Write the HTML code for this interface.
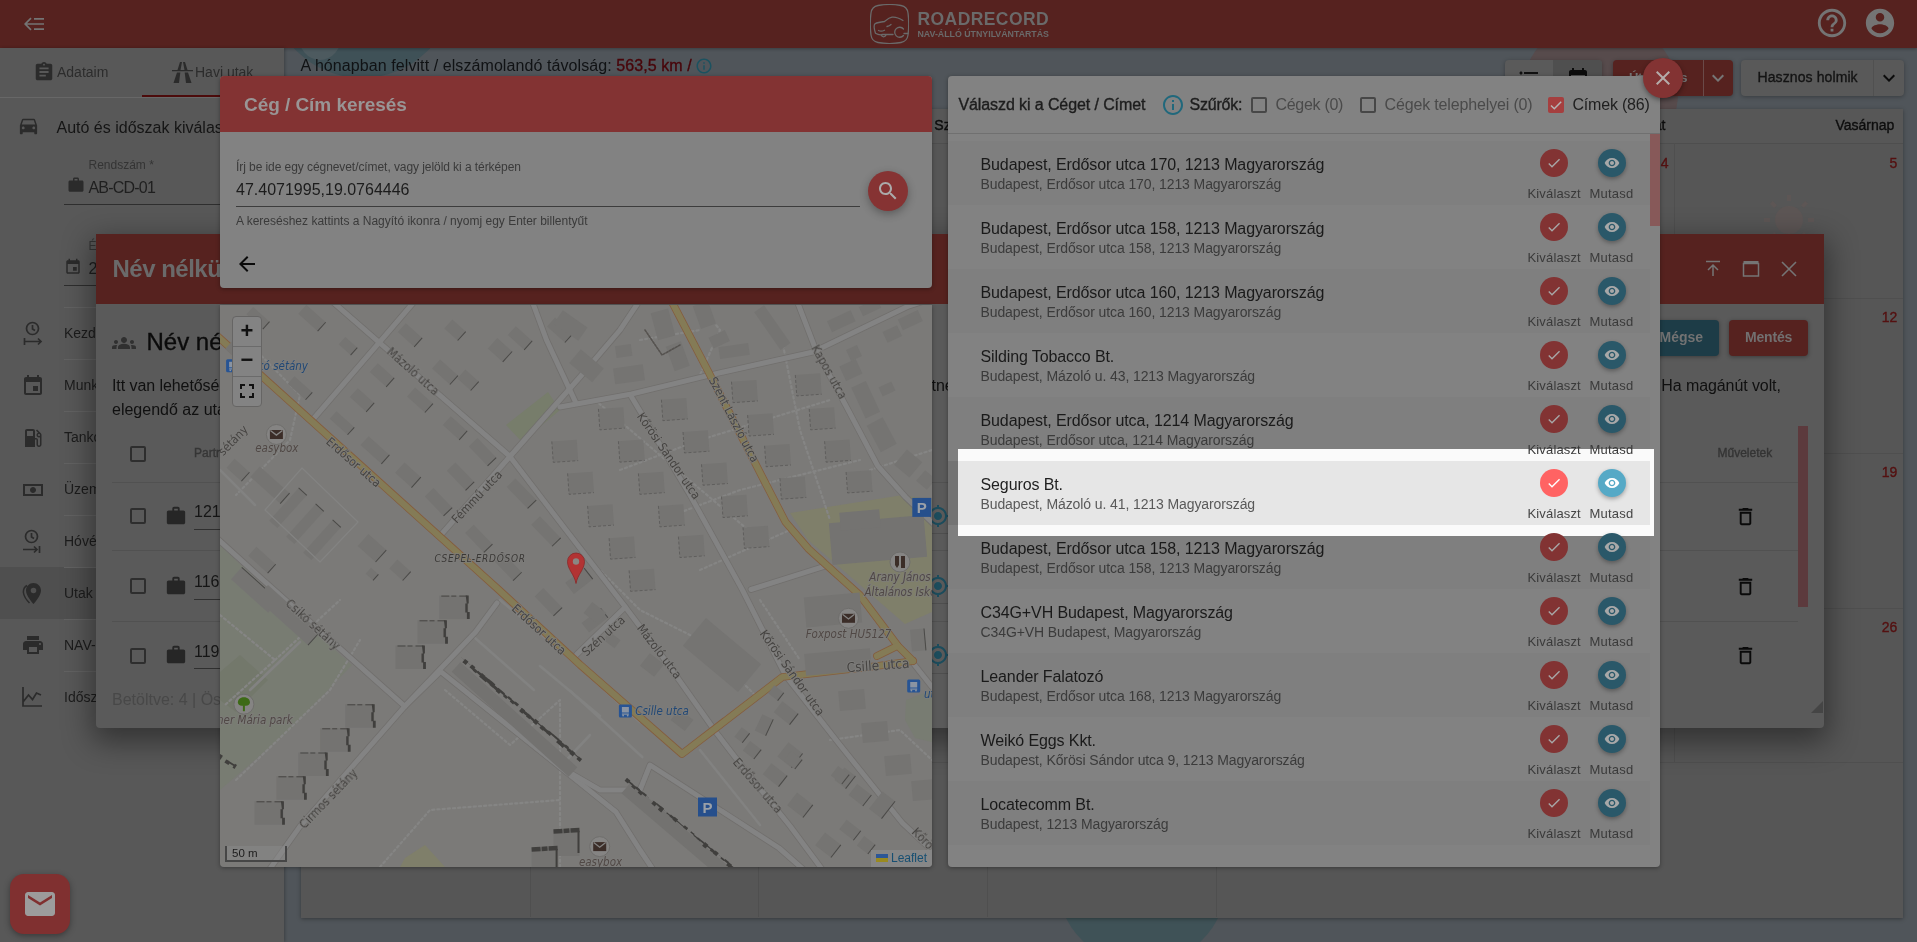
<!DOCTYPE html>
<html lang="hu"><head><meta charset="utf-8"><title>RoadRecord</title>
<style>
html,body{margin:0;padding:0}
body{width:1917px;height:942px;overflow:hidden;position:relative;background:#50555a;font-family:"Liberation Sans",sans-serif}
.a,.t,.ic{position:absolute}
.t{white-space:nowrap}
.m{-webkit-text-stroke:0.35px currentColor}

.bx{position:absolute;box-sizing:border-box}

</style></head><body>
<div id="app" style="position:absolute;left:0;top:0;width:1917px;height:942px;overflow:hidden;will-change:transform">
<div class="a" style="left:284px;top:48px;width:1633px;height:894px;background:#50555a;overflow:hidden"><div class="a" style="left:-14px;top:-152px;width:184px;height:182px;border-radius:50%;background:#3f5157"></div><div class="a" style="left:14px;top:-40px;width:44px;height:52px;border-radius:50%;background:#4d5a5f"></div><div class="a" style="left:1238px;top:-30px;width:156px;height:150px;border-radius:50%;background:#574b4c"></div><div class="a" style="left:773px;top:747px;width:170px;height:170px;border-radius:50%;background:#3f5257"></div></div>
<div class="a" style="left:0;top:0;width:1917px;height:48px;background:#56221f;box-shadow:0 1px 3px rgba(0,0,0,.3)"></div>
<svg class="ic" style="left:24px;top:17px;width:21px;height:14px" viewBox="0 0 21 14"><g stroke="#747474" stroke-width="1.7" fill="none"><path d="M7 1.2 1.2 7 7 12.800M1.2 7H20M10 1.800h10M10 12.200h10"/></g></svg>
<svg class="ic" style="left:870px;top:4px;width:39px;height:40px" viewBox="0 0 39 40"><g fill="none" stroke="#6a6a6a" stroke-width="1.3" stroke-linecap="round"><path d="M8 1.500C14 .300 25 .300 31 1.500c4 .800 6.500 3.500 7 7.500.800 6 .800 16 0 22-.5 4-3 6.700-7 7.500-6 1.200-17 1.200-23 0-4-.800-6.500-3.500-7-7.500-.800-6-.800-16 0-22 .5-4 3-6.700 7-7.500z"/><path d="M33 16.500c-4-2.500-8-3.800-11-3.300-3 .5-5 2.300-7.500 4.300-3 .3-7 .800-9.500 2.300-1 1-1 5 .5 9.500 2 1.200 3.500 1.500 5 1.500M11 30.800c1.200 2.700 4 2.700 5.200 0M12 30.500h11M17 22.500c1.500-.3 3-1 4-2M8.500 26.500c1.500.8 4 .8 6-.3"/><path d="M33.500 25a5 5 0 1 0 0 6.500M34 29.500h4"/></g></svg>
<div class="t" style="left:917.500px;top:8.500px;font-size:17.500px;line-height:20px;font-weight:700;color:#6a6a6a;letter-spacing:.42px">ROADRECORD</div>
<div class="t" style="left:917.500px;top:28.500px;font-size:8.800px;line-height:11px;font-weight:700;color:#6a6a6a">NAV-ÁLLÓ ÚTNYILVÁNTARTÁS</div>
<svg class="ic" style="left:1815px;top:6px;width:34px;height:34px;" viewBox="0 0 24 24"><path fill="#747474" d="M11 18h2v-2h-2v2zm1-16C6.48 2 2 6.48 2 12s4.48 10 10 10 10-4.48 10-10S17.52 2 12 2zm0 18c-4.41 0-8-3.59-8-8s3.59-8 8-8 8 3.59 8 8-3.59 8-8 8zm0-14c-2.21 0-4 1.79-4 4h2c0-1.1.9-2 2-2s2 .9 2 2c0 2-3 1.75-3 5h2c0-2.25 3-2.5 3-5 0-2.21-1.79-4-4-4z"/></svg>
<svg class="ic" style="left:1863px;top:6px;width:34px;height:34px;" viewBox="0 0 24 24"><path fill="#747474" d="M12 2C6.48 2 2 6.48 2 12s4.48 10 10 10 10-4.48 10-10S17.52 2 12 2zm0 3c1.66 0 3 1.34 3 3s-1.34 3-3 3-3-1.34-3-3 1.34-3 3-3zm0 14.2c-2.5 0-4.71-1.28-6-3.22.03-1.99 4-3.08 6-3.08 1.99 0 5.97 1.09 6 3.08-1.29 1.94-3.5 3.22-6 3.22z"/></svg>
<div class="a" style="left:0;top:48px;width:284px;height:894px;background:#585858;box-shadow:1px 0 3px rgba(0,0,0,.25)"></div>
<div class="a" style="left:0;top:97px;width:284px;height:1px;background:#676767"></div>
<div class="a" style="left:142px;top:95px;width:142px;height:2px;background:#4c0b0b"></div>
<svg class="ic" style="left:33px;top:61px;width:22px;height:22px;" viewBox="0 0 24 24"><path fill="#2b2b2b" d="M19 3h-4.18C14.4 1.84 13.3 1 12 1c-1.3 0-2.4.84-2.82 2H5c-1.1 0-2 .9-2 2v14c0 1.1.9 2 2 2h14c1.1 0 2-.9 2-2V5c0-1.1-.9-2-2-2zm-7 0c.55 0 1 .45 1 1s-.45 1-1 1-1-.45-1-1 .45-1 1-1zm2 14H7v-2h7v2zm3-4H7v-2h10v2zm0-4H7V7h10v2z"/></svg>
<div class="t " style="left:57px;top:63.0px;font-size:14px;line-height:18px;color:#2c2c2c;font-weight:400;">Adataim</div>
<svg class="ic" style="left:172px;top:62px;width:21px;height:21px" viewBox="0 0 21 21"><path fill="#2b2b2b" d="M0 8h21v1.300H0zM8 0h2L8.500 8h-3zM11 0h2l2.500 8h-3zM5 10.500h3.300L7 21H1.500zM12.700 10.500H16L19.500 21H14z"/></svg>
<div class="t " style="left:195px;top:63.0px;font-size:14px;line-height:18px;color:#2c2c2c;font-weight:400;">Havi utak</div>
<svg class="ic" style="left:16.5px;top:114px;width:23px;height:23px;" viewBox="0 0 24 24"><path fill="#2b2b2b" d="M18.92 6.01C18.72 5.42 18.16 5 17.5 5h-11c-.66 0-1.21.42-1.42 1.01L3 12v8c0 .55.45 1 1 1h1c.55 0 1-.45 1-1v-1h12v1c0 .55.45 1 1 1h1c.55 0 1-.45 1-1v-8l-2.08-5.99zM6.5 16c-.83 0-1.5-.67-1.5-1.5S5.67 13 6.5 13s1.5.67 1.5 1.5S7.33 16 6.5 16zm11 0c-.83 0-1.5-.67-1.5-1.5s.67-1.5 1.5-1.5 1.5.67 1.5 1.5-.67 1.5-1.5 1.5zM5 11l1.5-4.5h11L19 11H5z"/></svg>
<div class="t " style="left:56.5px;top:118.0px;font-size:16px;line-height:20px;color:#151515;font-weight:400;">Autó és időszak kiválasztás</div>
<div class="t " style="left:88.5px;top:158.0px;font-size:12px;line-height:15px;color:#343434;font-weight:400;">Rendszám *</div>
<svg class="ic" style="left:66.5px;top:176px;width:18px;height:18px;" viewBox="0 0 24 24"><path fill="#2b2b2b" d="M20 6h-4V4c0-1.11-.89-2-2-2h-4c-1.11 0-2 .89-2 2v2H4c-1.11 0-1.99.89-1.99 2L2 19c0 1.11.89 2 2 2h16c1.11 0 2-.89 2-2V8c0-1.11-.89-2-2-2zm-6 0h-4V4h4v2z"/></svg>
<div class="t " style="left:88.5px;top:177.5px;font-size:16px;line-height:20px;color:#1f1f1f;font-weight:400;letter-spacing:-.8px">AB-CD-01</div>
<div class="a" style="left:64px;top:204px;width:220px;height:1px;background:#2e2e2e"></div>
<div class="t " style="left:88.5px;top:238.5px;font-size:12px;line-height:15px;color:#343434;font-weight:400;">Év</div>
<svg class="ic" style="left:64px;top:258px;width:18px;height:18px;" viewBox="0 0 24 24"><path fill="#2b2b2b" d="M17 12h-5v5h5v-5zM16 1v2H8V1H6v2H5c-1.11 0-1.99.9-1.99 2L3 19c0 1.1.89 2 2 2h14c1.1 0 2-.9 2-2V5c0-1.1-.9-2-2-2h-1V1h-2zm3 18H5V8h14v11z"/></svg>
<div class="t " style="left:88.5px;top:258.5px;font-size:16px;line-height:20px;color:#1f1f1f;font-weight:400;">2024</div>
<div class="a" style="left:64px;top:284.500px;width:220px;height:1px;background:#2e2e2e"></div>
<div class="a" style="left:0;top:567px;width:284px;height:52px;background:#4f4f4f"></div>
<div class="a" style="left:64px;top:307px;width:220px;height:1px;background:#626262"></div>
<div class="t " style="left:64px;top:324.0px;font-size:14px;line-height:18px;color:#1c1c1c;font-weight:400;">Kezdő km óra állás</div>
<div class="a" style="left:64px;top:359px;width:220px;height:1px;background:#626262"></div>
<div class="t " style="left:64px;top:376.0px;font-size:14px;line-height:18px;color:#1c1c1c;font-weight:400;">Munkanapok</div>
<div class="a" style="left:64px;top:411px;width:220px;height:1px;background:#626262"></div>
<div class="t " style="left:64px;top:428.0px;font-size:14px;line-height:18px;color:#1c1c1c;font-weight:400;">Tankolások</div>
<div class="a" style="left:64px;top:463px;width:220px;height:1px;background:#626262"></div>
<div class="t " style="left:64px;top:480.0px;font-size:14px;line-height:18px;color:#1c1c1c;font-weight:400;">Üzemanyag árak</div>
<div class="a" style="left:64px;top:515px;width:220px;height:1px;background:#626262"></div>
<div class="t " style="left:64px;top:532.0px;font-size:14px;line-height:18px;color:#1c1c1c;font-weight:400;">Hóvégi km óra állás</div>
<div class="a" style="left:64px;top:567px;width:220px;height:1px;background:#626262"></div>
<div class="t " style="left:64px;top:584.0px;font-size:14px;line-height:18px;color:#1c1c1c;font-weight:400;">Utak</div>
<div class="a" style="left:64px;top:619px;width:220px;height:1px;background:#626262"></div>
<div class="t " style="left:64px;top:636.0px;font-size:14px;line-height:18px;color:#1c1c1c;font-weight:400;">NAV-álló nyomtatás</div>
<div class="a" style="left:64px;top:671px;width:220px;height:1px;background:#626262"></div>
<div class="t " style="left:64px;top:688.0px;font-size:14px;line-height:18px;color:#1c1c1c;font-weight:400;">Időszaki elemzés</div>
<svg class="ic" style="left:23px;top:321px;width:20px;height:26px" viewBox="0 0 20 26"><g fill="none" stroke="#2b2b2b" stroke-width="1.700"><circle cx="9.500" cy="7.500" r="6"/><path d="M9.500 4v4l2.500 1.500"/><path d="M1.500 17v7M1.500 20.500H18M15 17.500l3 3-3 3"/></g></svg>
<svg class="ic" style="left:21px;top:374px;width:24px;height:24px;" viewBox="0 0 24 24"><path fill="#2b2b2b" d="M17 12h-5v5h5v-5zM16 1v2H8V1H6v2H5c-1.11 0-1.99.9-1.99 2L3 19c0 1.1.89 2 2 2h14c1.1 0 2-.9 2-2V5c0-1.1-.9-2-2-2h-1V1h-2zm3 18H5V8h14v11z"/></svg>
<svg class="ic" style="left:21px;top:426px;width:24px;height:24px;" viewBox="0 0 24 24"><path fill="#2b2b2b" d="M19.77 7.23l.01-.01-3.72-3.72L15 4.56l2.11 2.11c-.94.36-1.61 1.26-1.61 2.33 0 1.38 1.12 2.5 2.5 2.5.36 0 .69-.08 1-.21v7.21c0 .55-.45 1-1 1s-1-.45-1-1V14c0-1.1-.9-2-2-2h-1V5c0-1.1-.9-2-2-2H6c-1.1 0-2 .9-2 2v16h10v-7.5h1.5v5c0 1.38 1.12 2.5 2.5 2.5s2.5-1.12 2.5-2.5V9c0-.69-.28-1.32-.73-1.77zM12 10H6V5h6v5zm6 0c-.55 0-1-.45-1-1s.45-1 1-1 1 .45 1 1-.45 1-1 1z"/></svg>
<svg class="ic" style="left:21px;top:478px;width:24px;height:24px;" viewBox="0 0 24 24"><path fill="#2b2b2b" d="M2 6v12h20V6H2zm18 10H4V8h16v8zm-8-7c-1.66 0-3 1.34-3 3s1.34 3 3 3 3-1.34 3-3-1.34-3-3-3z"/></svg>
<svg class="ic" style="left:22px;top:529px;width:20px;height:26px" viewBox="0 0 20 26"><g fill="none" stroke="#2b2b2b" stroke-width="1.700"><circle cx="9.500" cy="7.500" r="6"/><path d="M9.500 4v4l2.500 1.500"/><path d="M1 20.500H15M12 17.500l3 3-3 3M17.500 17v7"/></g></svg>
<svg class="ic" style="left:22px;top:582px;width:20px;height:24px" viewBox="0 0 20 24"><path fill="#2b2b2b" d="M11.500 1C7.400 1 4 4.300 4 8.500c0 5.500 7.500 13.500 7.500 13.500S19 14 19 8.500C19 4.300 15.600 1 11.500 1zm0 10.300a2.800 2.800 0 1 1 0-5.600 2.800 2.800 0 0 1 0 5.600z"/><path fill="none" stroke="#2b2b2b" stroke-width="1.500" d="M5 3.500C2.500 5 1 7.500 1.500 11c.5 3.500 3 7 6 10"/></svg>
<svg class="ic" style="left:21px;top:633px;width:24px;height:24px;" viewBox="0 0 24 24"><path fill="#2b2b2b" d="M19 8H5c-1.66 0-3 1.34-3 3v6h4v4h12v-4h4v-6c0-1.66-1.34-3-3-3zm-3 11H8v-5h8v5zm3-7c-.55 0-1-.45-1-1s.45-1 1-1 1 .45 1 1-.45 1-1 1zm-1-9H6v4h12V3z"/></svg>
<svg class="ic" style="left:21px;top:686px;width:22px;height:22px" viewBox="0 0 22 22"><path fill="none" stroke="#2b2b2b" stroke-width="1.700" d="M2 1v19h19M2 16l5.500-7 4 4.500 4-6.500 4.500 2"/></svg>
<div class="a" style="left:10px;top:874px;width:60px;height:60px;border-radius:14px;background:#803030;box-shadow:0 2px 6px rgba(0,0,0,.35)"></div>
<svg class="ic" style="left:22px;top:886px;width:36px;height:36px;" viewBox="0 0 24 24"><path fill="#9c9c9c" d="M20 4H4c-1.1 0-1.99.9-1.99 2L2 18c0 1.1.9 2 2 2h16c1.1 0 2-.9 2-2V6c0-1.1-.9-2-2-2zm0 4l-8 5-8-5V6l8 5 8-5v2z"/></svg>
<div class="t " style="left:300.5px;top:56.0px;font-size:16px;line-height:20px;color:#101214;font-weight:400;letter-spacing:.08px">A hónapban felvitt / elszámolandó távolság: <span class="m" style="color:#48050a">563,5 km /</span></div>
<svg class="ic" style="left:694.8px;top:57px;width:18px;height:18px;" viewBox="0 0 24 24"><path fill="#1c5260" d="M11 7h2v2h-2zm0 4h2v6h-2zm1-9C6.48 2 2 6.48 2 12s4.48 10 10 10 10-4.48 10-10S17.52 2 12 2zm0 18c-4.41 0-8-3.59-8-8s3.59-8 8-8 8 3.59 8 8-3.59 8-8 8z"/></svg>
<div class="a" style="left:1505px;top:60px;width:97px;height:36px;border-radius:4px;background:#5a5a5a;box-shadow:0 1px 4px rgba(0,0,0,.3)"></div>
<div class="a" style="left:1553px;top:60px;width:49px;height:36px;border-radius:0 4px 4px 0;background:#4f4f4f"></div>
<svg class="ic" style="left:1517px;top:67px;width:24px;height:24px;" viewBox="0 0 24 24"><path fill="#111" d="M4 10.5c-.83 0-1.5.67-1.5 1.5s.67 1.5 1.5 1.5 1.5-.67 1.5-1.5-.67-1.5-1.5-1.5zm0-6c-.83 0-1.5.67-1.5 1.5S3.17 7.500 4 7.500 5.500 6.830 5.500 6 4.830 4.500 4 4.500zm0 12c-.83 0-1.500.68-1.500 1.500s.68 1.500 1.500 1.500 1.500-.68 1.500-1.500-.67-1.500-1.500-1.500zM7 19h14v-2H7v2zm0-6h14v-2H7v2zm0-8v2h14V5H7z"/></svg>
<svg class="ic" style="left:1566px;top:67px;width:24px;height:24px;" viewBox="0 0 24 24"><path fill="#0c0c0c" d="M17 12h-5v5h5v-5zM16 1v2H8V1H6v2H5c-1.11 0-1.99.9-1.99 2L3 19c0 1.1.89 2 2 2h14c1.1 0 2-.9 2-2V5c0-1.1-.9-2-2-2h-1V1h-2zm3 18H5V8h14v11z"/></svg>
<div class="a" style="left:1613px;top:60px;width:120px;height:36px;border-radius:4px;background:#56221f;box-shadow:0 1px 4px rgba(0,0,0,.3)"></div>
<div class="a" style="left:1703px;top:60px;width:1px;height:36px;background:#6a4a48"></div>
<div class="t " style="left:1629px;top:70.0px;font-size:13px;line-height:16px;color:#767676;font-weight:700;letter-spacing:-.45px">Útvonalas</div>
<svg class="ic" style="left:1706px;top:66px;width:24px;height:24px;" viewBox="0 0 24 24"><path fill="#767676" d="M16.59 8.59L12 13.17 7.41 8.59 6 10l6 6 6-6z"/></svg>
<div class="a" style="left:1741px;top:60px;width:163px;height:36px;border-radius:4px;background:#595959;box-shadow:0 1px 4px rgba(0,0,0,.3)"></div>
<div class="a" style="left:1873px;top:60px;width:1px;height:36px;background:#505050"></div>
<div class="t m" style="left:1757.5px;top:67.7px;font-size:14px;line-height:18px;color:#141414;font-weight:400;letter-spacing:.1px">Hasznos holmik</div>
<svg class="ic" style="left:1877px;top:66px;width:24px;height:24px;" viewBox="0 0 24 24"><path fill="#0c0c0c" d="M16.59 8.59L12 13.17 7.41 8.59 6 10l6 6 6-6z"/></svg>
<div class="a" style="left:300.500px;top:108.500px;width:1602.500px;height:809.500px;background:#565656;box-shadow:0 1px 4px rgba(0,0,0,.35)"></div>
<div class="a" style="left:300.500px;top:108.500px;width:1602.500px;height:35px;background:#575757"></div>
<div class="a" style="left:300.500px;top:143px;width:1602.500px;height:1px;background:#4e4e4e"></div>
<div class="a" style="left:529.5px;top:143px;width:1px;height:774px;background:#4f4f4f"></div>
<div class="a" style="left:758.4px;top:143px;width:1px;height:774px;background:#4f4f4f"></div>
<div class="a" style="left:987.3px;top:143px;width:1px;height:774px;background:#4f4f4f"></div>
<div class="a" style="left:1216.2px;top:143px;width:1px;height:774px;background:#4f4f4f"></div>
<div class="a" style="left:1445.1px;top:143px;width:1px;height:619.5px;background:#4f4f4f"></div>
<div class="a" style="left:1674.0px;top:143px;width:1px;height:619.5px;background:#4f4f4f"></div>
<div class="a" style="left:300.500px;top:298.1px;width:1602.500px;height:1px;background:#4f4f4f"></div>
<div class="a" style="left:300.500px;top:452.8px;width:1602.500px;height:1px;background:#4f4f4f"></div>
<div class="a" style="left:300.500px;top:607.5px;width:1602.500px;height:1px;background:#4f4f4f"></div>
<div class="a" style="left:300.500px;top:762.2px;width:1602.500px;height:1px;background:#4f4f4f"></div>
<div class="t m" style="left:300.6px;width:220.3px;text-align:right;top:116px;font-size:14px;line-height:18px;color:#0d0d0d">Hétfő</div>
<div class="t m" style="left:529.5px;width:220.3px;text-align:right;top:116px;font-size:14px;line-height:18px;color:#0d0d0d">Kedd</div>
<div class="t m" style="left:758.4px;width:220.3px;text-align:right;top:116px;font-size:14px;line-height:18px;color:#0d0d0d">Szerda</div>
<div class="t m" style="left:987.3px;width:220.3px;text-align:right;top:116px;font-size:14px;line-height:18px;color:#0d0d0d">Csütörtök</div>
<div class="t m" style="left:1216.2px;width:220.3px;text-align:right;top:116px;font-size:14px;line-height:18px;color:#0d0d0d">Péntek</div>
<div class="t m" style="left:1445.1px;width:220.3px;text-align:right;top:116px;font-size:14px;line-height:18px;color:#0d0d0d">Szombat</div>
<div class="t m" style="left:1674.0px;width:220.3px;text-align:right;top:116px;font-size:14px;line-height:18px;color:#0d0d0d">Vasárnap</div>
<div class="t m" style="left:758.4px;width:223.4px;text-align:right;top:153.5px;font-size:14px;line-height:18px;color:#1a1a1a">1</div>
<div class="t m" style="left:987.3px;width:223.4px;text-align:right;top:153.5px;font-size:14px;line-height:18px;color:#1a1a1a">2</div>
<div class="t m" style="left:1216.2px;width:223.4px;text-align:right;top:153.5px;font-size:14px;line-height:18px;color:#1a1a1a">3</div>
<div class="t m" style="left:1445.1px;width:223.4px;text-align:right;top:153.5px;font-size:14px;line-height:18px;color:#541010">4</div>
<div class="t m" style="left:1674.0px;width:223.4px;text-align:right;top:153.5px;font-size:14px;line-height:18px;color:#541010">5</div>
<div class="t m" style="left:300.6px;width:223.4px;text-align:right;top:308.2px;font-size:14px;line-height:18px;color:#1a1a1a">6</div>
<div class="t m" style="left:529.5px;width:223.4px;text-align:right;top:308.2px;font-size:14px;line-height:18px;color:#1a1a1a">7</div>
<div class="t m" style="left:758.4px;width:223.4px;text-align:right;top:308.2px;font-size:14px;line-height:18px;color:#1a1a1a">8</div>
<div class="t m" style="left:987.3px;width:223.4px;text-align:right;top:308.2px;font-size:14px;line-height:18px;color:#1a1a1a">9</div>
<div class="t m" style="left:1216.2px;width:223.4px;text-align:right;top:308.2px;font-size:14px;line-height:18px;color:#1a1a1a">10</div>
<div class="t m" style="left:1445.1px;width:223.4px;text-align:right;top:308.2px;font-size:14px;line-height:18px;color:#541010">11</div>
<div class="t m" style="left:1674.0px;width:223.4px;text-align:right;top:308.2px;font-size:14px;line-height:18px;color:#541010">12</div>
<div class="t m" style="left:300.6px;width:223.4px;text-align:right;top:462.9px;font-size:14px;line-height:18px;color:#1a1a1a">13</div>
<div class="t m" style="left:529.5px;width:223.4px;text-align:right;top:462.9px;font-size:14px;line-height:18px;color:#1a1a1a">14</div>
<div class="t m" style="left:758.4px;width:223.4px;text-align:right;top:462.9px;font-size:14px;line-height:18px;color:#1a1a1a">15</div>
<div class="t m" style="left:987.3px;width:223.4px;text-align:right;top:462.9px;font-size:14px;line-height:18px;color:#1a1a1a">16</div>
<div class="t m" style="left:1216.2px;width:223.4px;text-align:right;top:462.9px;font-size:14px;line-height:18px;color:#1a1a1a">17</div>
<div class="t m" style="left:1445.1px;width:223.4px;text-align:right;top:462.9px;font-size:14px;line-height:18px;color:#541010">18</div>
<div class="t m" style="left:1674.0px;width:223.4px;text-align:right;top:462.9px;font-size:14px;line-height:18px;color:#541010">19</div>
<div class="t m" style="left:300.6px;width:223.4px;text-align:right;top:617.6px;font-size:14px;line-height:18px;color:#1a1a1a">20</div>
<div class="t m" style="left:529.5px;width:223.4px;text-align:right;top:617.6px;font-size:14px;line-height:18px;color:#1a1a1a">21</div>
<div class="t m" style="left:758.4px;width:223.4px;text-align:right;top:617.6px;font-size:14px;line-height:18px;color:#1a1a1a">22</div>
<div class="t m" style="left:987.3px;width:223.4px;text-align:right;top:617.6px;font-size:14px;line-height:18px;color:#1a1a1a">23</div>
<div class="t m" style="left:1216.2px;width:223.4px;text-align:right;top:617.6px;font-size:14px;line-height:18px;color:#1a1a1a">24</div>
<div class="t m" style="left:1445.1px;width:223.4px;text-align:right;top:617.6px;font-size:14px;line-height:18px;color:#541010">25</div>
<div class="t m" style="left:1674.0px;width:223.4px;text-align:right;top:617.6px;font-size:14px;line-height:18px;color:#541010">26</div>
<div class="t m" style="left:300.6px;width:223.4px;text-align:right;top:772.3px;font-size:14px;line-height:18px;color:#1a1a1a">27</div>
<div class="t m" style="left:529.5px;width:223.4px;text-align:right;top:772.3px;font-size:14px;line-height:18px;color:#1a1a1a">28</div>
<div class="t m" style="left:758.4px;width:223.4px;text-align:right;top:772.3px;font-size:14px;line-height:18px;color:#1a1a1a">29</div>
<div class="t m" style="left:987.3px;width:223.4px;text-align:right;top:772.3px;font-size:14px;line-height:18px;color:#1a1a1a">30</div>
<div class="t m" style="left:1216.2px;width:223.4px;text-align:right;top:772.3px;font-size:14px;line-height:18px;color:#1a1a1a">31</div>
<svg class="ic" style="left:1762px;top:193px;width:54px;height:54px" viewBox="-27 -27 54 54"><g fill="#5d5655"><circle r="14"/><rect x="-2" y="-25" width="4" height="6" transform="rotate(0)"/><rect x="-2" y="-25" width="4" height="6" transform="rotate(45)"/><rect x="-2" y="-25" width="4" height="6" transform="rotate(90)"/><rect x="-2" y="-25" width="4" height="6" transform="rotate(135)"/><rect x="-2" y="-25" width="4" height="6" transform="rotate(180)"/><rect x="-2" y="-25" width="4" height="6" transform="rotate(225)"/><rect x="-2" y="-25" width="4" height="6" transform="rotate(270)"/><rect x="-2" y="-25" width="4" height="6" transform="rotate(315)"/></g></svg>
<div class="a" style="left:96px;top:234px;width:1728px;height:493.500px;border-radius:0 0 4px 4px;background:#5a5a5a;box-shadow:0 10px 30px 4px rgba(0,0,0,.42)"></div>
<div class="a" style="left:96px;top:234px;width:1728px;height:69.500px;background:#56221f"></div>
<div class="t " style="left:112.5px;top:253.5px;font-size:24px;line-height:30px;color:#6a6a6a;font-weight:700;letter-spacing:-.5px">Név nélküli út</div>
<svg class="ic" style="left:1704px;top:260px;width:18px;height:18px" viewBox="0 0 18 18"><path fill="none" stroke="#757575" stroke-width="1.500" d="M2 1.500h14M9 16V5M4 10l5-5 5 5"/></svg>
<svg class="ic" style="left:1742px;top:260px;width:18px;height:18px" viewBox="0 0 18 18"><path fill="none" stroke="#757575" stroke-width="1.500" d="M1.500 3.500h15v12.500h-15z"/><path stroke="#757575" stroke-width="3" d="M1.500 2.500h15"/></svg>
<svg class="ic" style="left:1780px;top:260px;width:18px;height:18px" viewBox="0 0 18 18"><path fill="none" stroke="#757575" stroke-width="1.600" d="M2 2l14 14M16 2 2 16"/></svg>
<svg class="ic" style="left:112px;top:330.5px;width:24px;height:24px;" viewBox="0 0 24 24"><path fill="#303030" d="M12 12.75c1.63 0 3.07.39 4.24.9 1.080.48 1.760 1.560 1.760 2.730V18H6v-1.610c0-1.180.68-2.260 1.760-2.730 1.170-.52 2.610-.91 4.240-.91zM4 13c1.100 0 2-.9 2-2s-.9-2-2-2-2 .9-2 2 .9 2 2 2zm1.130 1.100c-.37-.06-.74-.1-1.130-.1-.99 0-1.930.21-2.780.58C.48 14.900 0 15.620 0 16.430V18h4.500v-1.610c0-.83.23-1.610.63-2.290zM20 13c1.100 0 2-.9 2-2s-.9-2-2-2-2 .9-2 2 .9 2 2 2zm4 3.430c0-.81-.48-1.530-1.220-1.850-.85-.37-1.790-.58-2.780-.58-.39 0-.76.04-1.130.1.4.68.63 1.460.63 2.290V18H24v-1.570zM12 6c1.660 0 3 1.340 3 3s-1.340 3-3 3-3-1.340-3-3 1.340-3 3-3z"/></svg>
<div class="t m" style="left:146.5px;top:327.0px;font-size:24px;line-height:30px;color:#0b0b0b;font-weight:400;">Név nélküli út</div>
<div class="a" style="left:1645px;top:320px;width:74px;height:36px;border-radius:4px;background:#1d3c47;box-shadow:0 1px 4px rgba(0,0,0,.35)"></div>
<div class="t " style="left:1659.5px;top:327.5px;font-size:14px;line-height:18px;color:#727272;font-weight:700;">Mégse</div>
<div class="a" style="left:1729px;top:320px;width:79px;height:36px;border-radius:4px;background:#56221f;box-shadow:0 1px 4px rgba(0,0,0,.35)"></div>
<div class="t " style="left:1745px;top:327.5px;font-size:14px;line-height:18px;color:#727070;font-weight:700;letter-spacing:-.18px">Mentés</div>
<div class="t " style="left:112px;top:375.5px;font-size:16px;line-height:20px;color:#101010;font-weight:400;letter-spacing:-.073px">Itt van lehetőséged az úthoz tartozó partnereket megadni. Elegendő csak azt a partnert megadni, ahol jártál, más partnert nem szükséges felvinni.</div>
<div class="t " style="left:1661.3px;top:375.5px;font-size:16px;line-height:20px;color:#101010;font-weight:400;letter-spacing:-.09px">Ha magánút volt,</div>
<div class="t " style="left:112px;top:399.5px;font-size:16px;line-height:20px;color:#101010;font-weight:400;">elegendő az utazás kezdő és végpontját megadni.</div>
<div class="bx" style="left:130px;top:446px;width:16px;height:16px;border:2px solid #2e2e2e;border-radius:2px"></div>
<div class="t m" style="left:194px;top:446.0px;font-size:12px;line-height:15px;color:#363636;font-weight:400;">Partner</div>
<div class="t m" style="left:1717.5px;top:446.0px;font-size:12px;line-height:15px;color:#343434;font-weight:400;">Műveletek</div>
<div class="a" style="left:112px;top:481.5px;width:1686px;height:1px;background:#515151"></div>
<div class="a" style="left:112px;top:550.2px;width:1686px;height:1px;background:#515151"></div>
<div class="a" style="left:112px;top:620.5px;width:1686px;height:1px;background:#515151"></div>
<div class="bx" style="left:130px;top:508px;width:16px;height:16px;border:2px solid #2e2e2e;border-radius:2px"></div>
<svg class="ic" style="left:165px;top:504.5px;width:22px;height:22px;" viewBox="0 0 24 24"><path fill="#262626" d="M20 6h-4V4c0-1.11-.89-2-2-2h-4c-1.11 0-2 .89-2 2v2H4c-1.11 0-1.99.89-1.99 2L2 19c0 1.11.89 2 2 2h16c1.11 0 2-.89 2-2V8c0-1.11-.89-2-2-2zm-6 0h-4V4h4v2z"/></svg>
<div class="t " style="left:194px;top:502.0px;font-size:16px;line-height:20px;color:#151515;font-weight:400;">1213 Budapest, Erdősor utca 158</div>
<div class="a" style="left:194px;top:528.5px;width:720px;height:1px;background:#303030"></div>
<svg class="ic" style="left:926px;top:503.5px;width:24px;height:24px;" viewBox="0 0 24 24"><path fill="#1c4c5c" d="M12 8c-2.21 0-4 1.79-4 4s1.79 4 4 4 4-1.790 4-4-1.790-4-4-4zm8.940 3c-.46-4.170-3.770-7.480-7.940-7.940V1h-2v2.060C6.830 3.520 3.520 6.830 3.060 11H1v2h2.060c.46 4.170 3.770 7.480 7.940 7.940V23h2v-2.060c4.170-.46 7.480-3.770 7.940-7.940H23v-2h-2.060zM12 19c-3.870 0-7-3.130-7-7s3.130-7 7-7 7 3.130 7 7-3.130 7-7 7z"/></svg>
<div class="a" style="left:920px;top:533px;width:40px;height:1px;background:#4e4e4e"></div>
<svg class="ic" style="left:1733.5px;top:504.5px;width:23px;height:23px;" viewBox="0 0 24 24"><path fill="#0a0a0a" d="M6 19c0 1.1.9 2 2 2h8c1.1 0 2-.9 2-2V7H6v12zM8 9h8v10H8V9zm7.5-5l-1-1h-5l-1 1H5v2h14V4h-3.5z"/></svg>
<div class="bx" style="left:130px;top:578px;width:16px;height:16px;border:2px solid #2e2e2e;border-radius:2px"></div>
<svg class="ic" style="left:165px;top:574.5px;width:22px;height:22px;" viewBox="0 0 24 24"><path fill="#262626" d="M20 6h-4V4c0-1.11-.89-2-2-2h-4c-1.11 0-2 .89-2 2v2H4c-1.11 0-1.99.89-1.99 2L2 19c0 1.11.89 2 2 2h16c1.11 0 2-.89 2-2V8c0-1.11-.89-2-2-2zm-6 0h-4V4h4v2z"/></svg>
<div class="t " style="left:194px;top:572.0px;font-size:16px;line-height:20px;color:#151515;font-weight:400;">1163 Budapest, Cziráki utca 26-32</div>
<div class="a" style="left:194px;top:598.5px;width:720px;height:1px;background:#303030"></div>
<svg class="ic" style="left:926px;top:573.5px;width:24px;height:24px;" viewBox="0 0 24 24"><path fill="#1c4c5c" d="M12 8c-2.21 0-4 1.79-4 4s1.79 4 4 4 4-1.790 4-4-1.790-4-4-4zm8.940 3c-.46-4.170-3.770-7.480-7.940-7.940V1h-2v2.060C6.830 3.520 3.520 6.830 3.060 11H1v2h2.060c.46 4.170 3.770 7.480 7.940 7.940V23h2v-2.060c4.170-.46 7.480-3.770 7.940-7.940H23v-2h-2.060zM12 19c-3.870 0-7-3.130-7-7s3.130-7 7-7 7 3.130 7 7-3.130 7-7 7z"/></svg>
<div class="a" style="left:920px;top:603px;width:40px;height:1px;background:#4e4e4e"></div>
<svg class="ic" style="left:1733.5px;top:574.5px;width:23px;height:23px;" viewBox="0 0 24 24"><path fill="#0a0a0a" d="M6 19c0 1.1.9 2 2 2h8c1.1 0 2-.9 2-2V7H6v12zM8 9h8v10H8V9zm7.5-5l-1-1h-5l-1 1H5v2h14V4h-3.5z"/></svg>
<div class="bx" style="left:130px;top:647.5px;width:16px;height:16px;border:2px solid #2e2e2e;border-radius:2px"></div>
<svg class="ic" style="left:165px;top:644.0px;width:22px;height:22px;" viewBox="0 0 24 24"><path fill="#262626" d="M20 6h-4V4c0-1.11-.89-2-2-2h-4c-1.11 0-2 .89-2 2v2H4c-1.11 0-1.99.89-1.99 2L2 19c0 1.11.89 2 2 2h16c1.11 0 2-.89 2-2V8c0-1.11-.89-2-2-2zm-6 0h-4V4h4v2z"/></svg>
<div class="t " style="left:194px;top:641.5px;font-size:16px;line-height:20px;color:#151515;font-weight:400;">1191 Budapest, Üllői út 201</div>
<div class="a" style="left:194px;top:668.0px;width:720px;height:1px;background:#303030"></div>
<svg class="ic" style="left:926px;top:643.0px;width:24px;height:24px;" viewBox="0 0 24 24"><path fill="#1c4c5c" d="M12 8c-2.21 0-4 1.79-4 4s1.79 4 4 4 4-1.790 4-4-1.790-4-4-4zm8.940 3c-.46-4.170-3.770-7.480-7.940-7.940V1h-2v2.060C6.830 3.520 3.520 6.830 3.060 11H1v2h2.060c.46 4.170 3.770 7.480 7.940 7.940V23h2v-2.060c4.170-.46 7.480-3.770 7.940-7.940H23v-2h-2.060zM12 19c-3.870 0-7-3.130-7-7s3.130-7 7-7 7 3.130 7 7-3.130 7-7 7z"/></svg>
<div class="a" style="left:920px;top:672.5px;width:40px;height:1px;background:#4e4e4e"></div>
<svg class="ic" style="left:1733.5px;top:644.0px;width:23px;height:23px;" viewBox="0 0 24 24"><path fill="#0a0a0a" d="M6 19c0 1.1.9 2 2 2h8c1.1 0 2-.9 2-2V7H6v12zM8 9h8v10H8V9zm7.5-5l-1-1h-5l-1 1H5v2h14V4h-3.5z"/></svg>
<div class="a" style="left:1798px;top:426px;width:10px;height:181px;background:#5c3a3d"></div>
<div class="t " style="left:112px;top:689.5px;font-size:16px;line-height:20px;color:#484848;font-weight:400;">Betöltve: 4 | Összesen: 4</div>
<svg class="ic" style="left:1811px;top:701px;width:12px;height:12px" viewBox="0 0 12 12"><path fill="#454545" d="M12 0v12H0z"/></svg>
<div class="a" style="left:220px;top:76px;width:712px;height:211.500px;border-radius:4px;background:#828282;box-shadow:0 1px 4px rgba(0,0,0,.35)"></div>
<div class="a" style="left:220px;top:76px;width:712px;height:55.500px;border-radius:4px 4px 0 0;background:#833333"></div>
<div class="t " style="left:244px;top:92.5px;font-size:19px;line-height:24px;color:#999595;font-weight:700;letter-spacing:-.05px">Cég / Cím keresés</div>
<div class="t " style="left:236px;top:159.5px;font-size:12px;line-height:15px;color:#3a3a3a;font-weight:400;letter-spacing:-.07px">Írj be ide egy cégnevet/címet, vagy jelöld ki a térképen</div>
<div class="t " style="left:236px;top:179.5px;font-size:16px;line-height:20px;color:#1c1c1c;font-weight:400;">47.4071995,19.0764446</div>
<div class="a" style="left:236px;top:206px;width:624px;height:1px;background:#3c3c3c"></div>
<div class="t " style="left:236px;top:213.5px;font-size:12px;line-height:15px;color:#3a3a3a;font-weight:400;">A kereséshez kattints a Nagyító ikonra / nyomj egy Enter billentyűt</div>
<div class="a" style="left:868px;top:171px;width:40px;height:40px;border-radius:50%;background:#863333;box-shadow:0 3px 8px rgba(0,0,0,.3)"></div>
<svg class="ic" style="left:876px;top:179px;width:24px;height:24px;" viewBox="0 0 24 24"><path fill="#ababab" d="M15.5 14h-.79l-.28-.27C15.41 12.59 16 11.11 16 9.5 16 5.91 13.09 3 9.5 3S3 5.91 3 9.5 5.91 16 9.5 16c1.61 0 3.09-.59 4.23-1.57l.27.28v.79l5 4.99L20.49 19l-4.99-5zm-6 0C7.01 14 5 11.99 5 9.5S7.01 5 9.5 5 14 7.01 14 9.5 11.99 14 9.5 14z"/></svg>
<svg class="ic" style="left:235px;top:252px;width:24px;height:24px;" viewBox="0 0 24 24"><path fill="#0a0a0a" d="M20 11H7.83l5.59-5.59L12 4l-8 8 8 8 1.41-1.41L7.83 13H20v-2z"/></svg>
<div class="a" style="left:220px;top:305px;width:712px;height:562px;overflow:hidden;border-radius:0 0 4px 4px;box-shadow:0 1px 4px rgba(0,0,0,.35)"><svg style="position:absolute;left:0;top:0" width="712" height="562" viewBox="220 305 712 562"><rect x="220" y="305" width="712" height="562" fill="#7b7a78"/><path d="M220 545 L262 585 L352 665 L290 730 L220 790Z" fill="#787c72"/><path d="M240 655 L268 680 L236 712 L220 700 L220 672Z" fill="#73786b"/><path d="M790 513 L903 495 L932 500 L932 612 L905 624 L860 585 L808 540Z" fill="#7f7f6a"/><path d="M506 425 L548 392 L560 410 L522 442Z" fill="#777d6b"/><path d="M906 700 L932 690 L932 742 L915 738 L905 720Z" fill="#787c72"/><path d="M405 858 L425 845 L445 867 L400 867Z" fill="#7f7f6a"/><path d="M236.0 330.0 L300.0 395.0 L290.0 440.0 L236.0 495.0" fill="none" stroke="#858584" stroke-width="2.2" stroke-linejoin="round" stroke-linecap="round" stroke-dasharray="2.2 3"/><path d="M220.0 615.0 L275.0 660.0 L225.0 705.0" fill="none" stroke="#858584" stroke-width="2.2" stroke-linejoin="round" stroke-linecap="round" stroke-dasharray="2.2 3"/><path d="M275.0 660.0 L340.0 600.0" fill="none" stroke="#858584" stroke-width="2.2" stroke-linejoin="round" stroke-linecap="round" stroke-dasharray="2.2 3"/><path d="M236.0 780.0 L330.0 690.0 L360.0 640.0" fill="none" stroke="#858584" stroke-width="2.2" stroke-linejoin="round" stroke-linecap="round" stroke-dasharray="2.2 3"/><path d="M445.0 690.0 L510.0 745.0 L560.0 700.0 L560.0 867.0" fill="none" stroke="#858584" stroke-width="2.2" stroke-linejoin="round" stroke-linecap="round" stroke-dasharray="2.2 3"/><path d="M380.0 867.0 L430.0 810.0 L560.0 800.0" fill="none" stroke="#858584" stroke-width="2.2" stroke-linejoin="round" stroke-linecap="round" stroke-dasharray="2.2 3"/><path d="M590.0 560.0 L640.0 610.0 L700.0 640.0 L760.0 700.0" fill="none" stroke="#858584" stroke-width="2.2" stroke-linejoin="round" stroke-linecap="round" stroke-dasharray="2.2 3"/><path d="M700.0 305.0 L720.0 330.0 L700.0 375.0" fill="none" stroke="#858584" stroke-width="2.2" stroke-linejoin="round" stroke-linecap="round" stroke-dasharray="2.2 3"/><path d="M640.0 340.0 L700.0 330.0" fill="none" stroke="#858584" stroke-width="2.2" stroke-linejoin="round" stroke-linecap="round" stroke-dasharray="2.2 3"/><path d="M595.0 400.0 L760.0 540.0" fill="none" stroke="#858584" stroke-width="2.2" stroke-linejoin="round" stroke-linecap="round" stroke-dasharray="2.2 3"/><path d="M620.0 470.0 L700.0 440.0 L830.0 400.0" fill="none" stroke="#858584" stroke-width="2.2" stroke-linejoin="round" stroke-linecap="round" stroke-dasharray="2.2 3"/><path d="M660.0 520.0 L740.0 490.0 L860.0 460.0" fill="none" stroke="#858584" stroke-width="2.2" stroke-linejoin="round" stroke-linecap="round" stroke-dasharray="2.2 3"/><path d="M700.0 570.0 L790.0 530.0" fill="none" stroke="#858584" stroke-width="2.2" stroke-linejoin="round" stroke-linecap="round" stroke-dasharray="2.2 3"/><path d="M780.0 330.0 L800.0 430.0 L830.0 520.0" fill="none" stroke="#858584" stroke-width="2.2" stroke-linejoin="round" stroke-linecap="round" stroke-dasharray="2.2 3"/><path d="M870.0 470.0 L932.0 450.0" fill="none" stroke="#858584" stroke-width="2.2" stroke-linejoin="round" stroke-linecap="round" stroke-dasharray="2.2 3"/><path d="M830.0 740.0 L900.0 730.0 L932.0 760.0" fill="none" stroke="#858584" stroke-width="2.2" stroke-linejoin="round" stroke-linecap="round" stroke-dasharray="2.2 3"/><path d="M760.0 600.0 L800.0 660.0" fill="none" stroke="#858584" stroke-width="2.2" stroke-linejoin="round" stroke-linecap="round" stroke-dasharray="2.2 3"/><path d="M290.0 262.0 L334.0 303.0 L509.5 456.0 L566.0 530.0 L604.6 580.0 L625.3 607.0 L665.0 660.0 L715.0 731.0 L745.0 770.0 L790.0 826.0 L830.0 880.0" fill="none" stroke="#716f6d" stroke-width="6.6" stroke-linejoin="round" stroke-linecap="round" /><path d="M420.0 295.0 L380.0 341.6 L312.4 420.0" fill="none" stroke="#716f6d" stroke-width="6.6" stroke-linejoin="round" stroke-linecap="round" /><path d="M441.7 534.0 L509.5 457.0 L580.0 377.0 L620.0 330.0 L640.0 300.0" fill="none" stroke="#716f6d" stroke-width="6.6" stroke-linejoin="round" stroke-linecap="round" /><path d="M528.0 290.0 L546.5 340.0 L576.0 403.0" fill="none" stroke="#716f6d" stroke-width="6.6" stroke-linejoin="round" stroke-linecap="round" /><path d="M751.0 589.5 L826.6 565.7" fill="none" stroke="#716f6d" stroke-width="6.6" stroke-linejoin="round" stroke-linecap="round" /><path d="M560.0 407.0 L631.6 394.0 L708.5 375.4 L813.0 352.0 L908.6 306.0 L940.0 296.0" fill="none" stroke="#716f6d" stroke-width="6.6" stroke-linejoin="round" stroke-linecap="round" /><path d="M631.6 397.0 L690.0 495.0 L742.4 590.0 L785.5 675.4 L840.0 745.0 L902.4 823.0 L940.0 858.0" fill="none" stroke="#716f6d" stroke-width="6.6" stroke-linejoin="round" stroke-linecap="round" /><path d="M792.0 290.0 L797.8 303.0 L816.2 350.8 L847.0 407.7 L877.8 466.0 L905.5 497.0 L940.0 530.0" fill="none" stroke="#716f6d" stroke-width="6.6" stroke-linejoin="round" stroke-linecap="round" /><path d="M210.0 532.0 L263.0 580.0 L404.8 706.3" fill="none" stroke="#716f6d" stroke-width="6.6" stroke-linejoin="round" stroke-linecap="round" /><path d="M262.0 880.0 L300.0 826.4 L404.8 706.3 L475.6 632.0 L497.0 603.0" fill="none" stroke="#716f6d" stroke-width="6.6" stroke-linejoin="round" stroke-linecap="round" /><path d="M441.7 672.4 L580.0 783.0 L616.0 812.0 L640.0 850.0 L660.0 880.0" fill="none" stroke="#716f6d" stroke-width="6.6" stroke-linejoin="round" stroke-linecap="round" /><path d="M440.0 672.0 L404.8 706.3" fill="none" stroke="#716f6d" stroke-width="6.6" stroke-linejoin="round" stroke-linecap="round" /><path d="M913.0 663.0 L940.0 697.0" fill="none" stroke="#716f6d" stroke-width="6.6" stroke-linejoin="round" stroke-linecap="round" /><path d="M576.5 654.6 L625.3 607.0" fill="none" stroke="#716f6d" stroke-width="6.6" stroke-linejoin="round" stroke-linecap="round" /><path d="M560.0 767.0 L600.0 790.0 L640.0 790.0 L650.0 765.0 L779.0 848.0 L804.0 870.0" fill="none" stroke="#716f6d" stroke-width="6.6" stroke-linejoin="round" stroke-linecap="round" /><path d="M290.0 262.0 L334.0 303.0 L509.5 456.0 L566.0 530.0 L604.6 580.0 L625.3 607.0 L665.0 660.0 L715.0 731.0 L745.0 770.0 L790.0 826.0 L830.0 880.0" fill="none" stroke="#838383" stroke-width="5" stroke-linejoin="round" stroke-linecap="round" /><path d="M420.0 295.0 L380.0 341.6 L312.4 420.0" fill="none" stroke="#838383" stroke-width="5" stroke-linejoin="round" stroke-linecap="round" /><path d="M441.7 534.0 L509.5 457.0 L580.0 377.0 L620.0 330.0 L640.0 300.0" fill="none" stroke="#838383" stroke-width="5" stroke-linejoin="round" stroke-linecap="round" /><path d="M528.0 290.0 L546.5 340.0 L576.0 403.0" fill="none" stroke="#838383" stroke-width="5" stroke-linejoin="round" stroke-linecap="round" /><path d="M751.0 589.5 L826.6 565.7" fill="none" stroke="#838383" stroke-width="5" stroke-linejoin="round" stroke-linecap="round" /><path d="M560.0 407.0 L631.6 394.0 L708.5 375.4 L813.0 352.0 L908.6 306.0 L940.0 296.0" fill="none" stroke="#838383" stroke-width="5" stroke-linejoin="round" stroke-linecap="round" /><path d="M631.6 397.0 L690.0 495.0 L742.4 590.0 L785.5 675.4 L840.0 745.0 L902.4 823.0 L940.0 858.0" fill="none" stroke="#838383" stroke-width="5" stroke-linejoin="round" stroke-linecap="round" /><path d="M792.0 290.0 L797.8 303.0 L816.2 350.8 L847.0 407.7 L877.8 466.0 L905.5 497.0 L940.0 530.0" fill="none" stroke="#838383" stroke-width="5" stroke-linejoin="round" stroke-linecap="round" /><path d="M210.0 532.0 L263.0 580.0 L404.8 706.3" fill="none" stroke="#838383" stroke-width="5" stroke-linejoin="round" stroke-linecap="round" /><path d="M262.0 880.0 L300.0 826.4 L404.8 706.3 L475.6 632.0 L497.0 603.0" fill="none" stroke="#838383" stroke-width="5" stroke-linejoin="round" stroke-linecap="round" /><path d="M441.7 672.4 L580.0 783.0 L616.0 812.0 L640.0 850.0 L660.0 880.0" fill="none" stroke="#838383" stroke-width="5" stroke-linejoin="round" stroke-linecap="round" /><path d="M440.0 672.0 L404.8 706.3" fill="none" stroke="#838383" stroke-width="5" stroke-linejoin="round" stroke-linecap="round" /><path d="M913.0 663.0 L940.0 697.0" fill="none" stroke="#838383" stroke-width="5" stroke-linejoin="round" stroke-linecap="round" /><path d="M576.5 654.6 L625.3 607.0" fill="none" stroke="#838383" stroke-width="5" stroke-linejoin="round" stroke-linecap="round" /><path d="M560.0 767.0 L600.0 790.0 L640.0 790.0 L650.0 765.0 L779.0 848.0 L804.0 870.0" fill="none" stroke="#838383" stroke-width="5" stroke-linejoin="round" stroke-linecap="round" /><path d="M475.6 638.5 L534.0 690.0" fill="none" stroke="#828281" stroke-width="2.6" stroke-linejoin="round" stroke-linecap="round" /><path d="M540.0 666.0 L600.0 716.0" fill="none" stroke="#828281" stroke-width="2.6" stroke-linejoin="round" stroke-linecap="round" /><path d="M250.0 690.0 L300.0 642.0" fill="none" stroke="#828281" stroke-width="2.6" stroke-linejoin="round" stroke-linecap="round" /><path d="M220.0 470.0 L255.0 505.0" fill="none" stroke="#828281" stroke-width="2.6" stroke-linejoin="round" stroke-linecap="round" /><path d="M500.0 600.0 L560.0 650.0" fill="none" stroke="#828281" stroke-width="2.6" stroke-linejoin="round" stroke-linecap="round" /><path d="M560.0 650.0 L640.0 722.0" fill="none" stroke="#828281" stroke-width="2.6" stroke-linejoin="round" stroke-linecap="round" /><path d="M570.0 690.8 L642.3 757.0" fill="none" stroke="#828281" stroke-width="2.6" stroke-linejoin="round" stroke-linecap="round" /><path d="M700.0 750.0 L760.0 825.0" fill="none" stroke="#828281" stroke-width="2.6" stroke-linejoin="round" stroke-linecap="round" /><path d="M590.0 735.0 L560.0 767.0" fill="none" stroke="#828281" stroke-width="2.6" stroke-linejoin="round" stroke-linecap="round" /><path d="M205.0 325.0 L220.0 338.5 L499.0 590.0 L580.0 664.7 L682.0 754.0 L782.4 677.0 L877.0 666.0 L913.0 661.0" fill="none" stroke="#855d3e" stroke-width="7.8" stroke-linejoin="round" stroke-linecap="round" /><path d="M668.0 295.0 L673.0 304.0 L708.0 371.0 L763.8 480.0 L785.5 522.0 L808.4 548.8 L859.4 594.7 L897.7 645.7 L913.0 661.0" fill="none" stroke="#855d3e" stroke-width="7.8" stroke-linejoin="round" stroke-linecap="round" /><path d="M877.0 656.0 L897.7 645.7" fill="none" stroke="#855d3e" stroke-width="7.8" stroke-linejoin="round" stroke-linecap="round" /><path d="M205.0 325.0 L220.0 338.5 L499.0 590.0 L580.0 664.7 L682.0 754.0 L782.4 677.0 L877.0 666.0 L913.0 661.0" fill="none" stroke="#847b56" stroke-width="6.2" stroke-linejoin="round" stroke-linecap="round" /><path d="M668.0 295.0 L673.0 304.0 L708.0 371.0 L763.8 480.0 L785.5 522.0 L808.4 548.8 L859.4 594.7 L897.7 645.7 L913.0 661.0" fill="none" stroke="#847b56" stroke-width="6.2" stroke-linejoin="round" stroke-linecap="round" /><path d="M877.0 656.0 L897.7 645.7" fill="none" stroke="#847b56" stroke-width="6.2" stroke-linejoin="round" stroke-linecap="round" /><g transform="translate(312.0 318.0) rotate(42)"><rect x="-13.0" y="-6.0" width="26" height="12" fill="#757472"/><path d="M13.0 -6.0V6.0" stroke="#4a4947" stroke-width="1" /></g><g transform="translate(348.0 346.0) rotate(42)"><rect x="-8.0" y="-5.0" width="16" height="10" fill="#757472"/><path d="M8.0 -5.0V5.0" stroke="#4a4947" stroke-width="1" /></g><g transform="translate(258.0 318.0) rotate(42)"><rect x="-11.0" y="-5.0" width="22" height="10" fill="#757472"/><path d="M11.0 -5.0V5.0" stroke="#4a4947" stroke-width="1" /></g><g transform="translate(300.0 388.0) rotate(42)"><rect x="-12.0" y="-5.0" width="24" height="10" fill="#757472"/><path d="M12.0 -5.0V5.0" stroke="#4a4947" stroke-width="1" /></g><g transform="translate(236.0 352.0) rotate(42)"><rect x="-10.0" y="-5.0" width="20" height="10" fill="#757472"/><path d="M10.0 -5.0V5.0" stroke="#4a4947" stroke-width="1" /></g><g transform="translate(382.0 375.0) rotate(42)"><rect x="-11.0" y="-6.0" width="22" height="12" fill="#757472"/><path d="M11.0 -6.0V6.0" stroke="#4a4947" stroke-width="1" /></g><g transform="translate(362.0 400.0) rotate(42)"><rect x="-11.0" y="-6.0" width="22" height="12" fill="#757472"/><path d="M11.0 -6.0V6.0" stroke="#4a4947" stroke-width="1" /></g><g transform="translate(342.0 423.0) rotate(42)"><rect x="-12.0" y="-5.0" width="24" height="10" fill="#757472"/><path d="M12.0 -5.0V5.0" stroke="#4a4947" stroke-width="1" /></g><g transform="translate(375.0 450.0) rotate(42)"><rect x="-14.0" y="-6.0" width="28" height="12" fill="#757472"/><path d="M14.0 -6.0V6.0" stroke="#4a4947" stroke-width="1" /></g><g transform="translate(408.0 475.0) rotate(42)"><rect x="-11.0" y="-7.0" width="22" height="14" fill="#757472"/><path d="M11.0 -7.0V7.0" stroke="#4a4947" stroke-width="1" /></g><g transform="translate(420.0 400.0) rotate(42)"><rect x="-12.0" y="-6.0" width="24" height="12" fill="#757472"/><path d="M12.0 -6.0V6.0" stroke="#4a4947" stroke-width="1" /></g><g transform="translate(455.0 428.0) rotate(42)"><rect x="-11.0" y="-6.0" width="22" height="12" fill="#757472"/><path d="M11.0 -6.0V6.0" stroke="#4a4947" stroke-width="1" /></g><g transform="translate(410.0 335.0) rotate(42)"><rect x="-11.0" y="-6.0" width="22" height="12" fill="#757472"/><path d="M11.0 -6.0V6.0" stroke="#4a4947" stroke-width="1" /></g><g transform="translate(445.0 372.0) rotate(42)"><rect x="-12.0" y="-6.0" width="24" height="12" fill="#757472"/><path d="M12.0 -6.0V6.0" stroke="#4a4947" stroke-width="1" /></g><g transform="translate(468.0 380.0) rotate(42)"><rect x="-9.0" y="-6.0" width="18" height="12" fill="#757472"/><path d="M9.0 -6.0V6.0" stroke="#4a4947" stroke-width="1" /></g><g transform="translate(500.0 350.0) rotate(42)"><rect x="-10.0" y="-7.0" width="20" height="14" fill="#757472"/><path d="M10.0 -7.0V7.0" stroke="#4a4947" stroke-width="1" /></g><g transform="translate(520.0 338.0) rotate(42)"><rect x="-11.0" y="-6.0" width="22" height="12" fill="#757472"/><path d="M11.0 -6.0V6.0" stroke="#4a4947" stroke-width="1" /></g><g transform="translate(455.0 330.0) rotate(42)"><rect x="-9.0" y="-6.0" width="18" height="12" fill="#757472"/><path d="M9.0 -6.0V6.0" stroke="#4a4947" stroke-width="1" /></g><g transform="translate(560.0 330.0) rotate(42)"><rect x="-12.0" y="-6.0" width="24" height="12" fill="#757472"/><path d="M12.0 -6.0V6.0" stroke="#4a4947" stroke-width="1" /></g><g transform="translate(238.0 470.0) rotate(42)"><rect x="-10.0" y="-6.0" width="20" height="12" fill="#757472"/><path d="M10.0 -6.0V6.0" stroke="#4a4947" stroke-width="1" /></g><g transform="translate(270.0 485.0) rotate(42)"><rect x="-20.0" y="-7.0" width="40" height="14" fill="#757472"/><path d="M20.0 -7.0V7.0" stroke="#4a4947" stroke-width="1" /></g><g transform="translate(372.0 548.0) rotate(42)"><rect x="-12.0" y="-8.0" width="24" height="16" fill="#757472"/><path d="M12.0 -8.0V8.0" stroke="#4a4947" stroke-width="1" /></g><g transform="translate(400.0 570.0) rotate(42)"><rect x="-9.0" y="-6.0" width="18" height="12" fill="#757472"/><path d="M9.0 -6.0V6.0" stroke="#4a4947" stroke-width="1" /></g><g transform="translate(372.0 574.0) rotate(42)"><rect x="-5.0" y="-4.0" width="10" height="8" fill="#757472"/><path d="M5.0 -4.0V4.0" stroke="#4a4947" stroke-width="1" /></g><g transform="translate(482.5 452.0) rotate(46)"><rect x="-13.5" y="-6.0" width="27" height="12" fill="#757472"/><path d="M13.5 -6.0V6.0" stroke="#4a4947" stroke-width="1" /></g><g transform="translate(460.5 476.4) rotate(46)"><rect x="-13.5" y="-6.0" width="27" height="12" fill="#757472"/><path d="M13.5 -6.0V6.0" stroke="#4a4947" stroke-width="1" /></g><g transform="translate(438.5 502.0) rotate(46)"><rect x="-13.5" y="-6.0" width="27" height="12" fill="#757472"/><path d="M13.5 -6.0V6.0" stroke="#4a4947" stroke-width="1" /></g><g transform="translate(521.5 493.5) rotate(46)"><rect x="-15.0" y="-6.0" width="30" height="12" fill="#757472"/><path d="M15.0 -6.0V6.0" stroke="#4a4947" stroke-width="1" /></g><g transform="translate(546.0 531.3) rotate(46)"><rect x="-15.0" y="-6.0" width="30" height="12" fill="#757472"/><path d="M15.0 -6.0V6.0" stroke="#4a4947" stroke-width="1" /></g><g transform="translate(478.8 538.6) rotate(46)"><rect x="-13.5" y="-6.0" width="27" height="12" fill="#757472"/><path d="M13.5 -6.0V6.0" stroke="#4a4947" stroke-width="1" /></g><g transform="translate(508.0 566.7) rotate(46)"><rect x="-13.5" y="-6.0" width="27" height="12" fill="#757472"/><path d="M13.5 -6.0V6.0" stroke="#4a4947" stroke-width="1" /></g><g transform="translate(548.4 602.0) rotate(46)"><rect x="-13.5" y="-6.0" width="27" height="12" fill="#757472"/><path d="M13.5 -6.0V6.0" stroke="#4a4947" stroke-width="1" /></g><g transform="translate(579.0 581.0) rotate(-38)"><rect x="-12.0" y="-7.0" width="24" height="14" fill="#757472"/><path d="M12.0 -7.0V7.0" stroke="#4a4947" stroke-width="1" /></g><g transform="translate(594.8 620.4) rotate(-38)"><rect x="-12.0" y="-6.0" width="24" height="12" fill="#757472"/><path d="M12.0 -6.0V6.0" stroke="#4a4947" stroke-width="1" /></g><g transform="translate(570.6 325.5) rotate(35)"><rect x="-15.0" y="-8.0" width="30" height="16" fill="#757472"/></g><g transform="translate(586.5 365.8) rotate(40)"><rect x="-15.0" y="-9.0" width="30" height="18" fill="#757472"/></g><g transform="translate(623.7 351.0) rotate(-8)"><rect x="-8.0" y="-6.0" width="16" height="12" fill="#757472"/></g><g transform="translate(629.0 374.3) rotate(-8)"><rect x="-15.0" y="-8.0" width="30" height="16" fill="#757472"/></g><g transform="translate(663.0 324.4) rotate(-15)"><rect x="-9.0" y="-14.0" width="18" height="28" fill="#757472"/></g><g transform="translate(677.8 356.3) rotate(-20)"><rect x="-8.0" y="-13.0" width="16" height="26" fill="#757472"/></g><g transform="translate(704.4 314.9) rotate(-20)"><rect x="-8.0" y="-12.0" width="16" height="24" fill="#757472"/></g><g transform="translate(719.2 339.3) rotate(-25)"><rect x="-9.0" y="-6.0" width="18" height="12" fill="#757472"/></g><g transform="translate(734.1 351.0) rotate(-8)"><rect x="-15.0" y="-6.0" width="30" height="12" fill="#757472"/></g><g transform="translate(772.3 327.6) rotate(-35)"><rect x="-6.0" y="-23.0" width="12" height="46" fill="#757472"/></g><g transform="translate(841.3 321.2) rotate(-25)"><rect x="-13.0" y="-6.0" width="26" height="12" fill="#757472"/></g><g transform="translate(870.0 307.4) rotate(-25)"><rect x="-10.0" y="-5.0" width="20" height="10" fill="#757472"/></g><g transform="translate(892.3 334.0) rotate(-25)"><rect x="-8.0" y="-6.0" width="16" height="12" fill="#757472"/></g><g transform="translate(910.3 320.2) rotate(-25)"><rect x="-11.0" y="-6.0" width="22" height="12" fill="#757472"/></g><g transform="translate(854.0 353.0) rotate(-25)"><rect x="-6.0" y="-6.0" width="12" height="12" fill="#757472"/></g><g transform="translate(850.9 370.0) rotate(-25)"><rect x="-9.0" y="-8.0" width="18" height="16" fill="#757472"/></g><g transform="translate(865.7 399.8) rotate(-25)"><rect x="-8.0" y="-17.0" width="16" height="34" fill="#757472"/></g><g transform="translate(887.0 389.0) rotate(-25)"><rect x="-7.0" y="-5.0" width="14" height="10" fill="#757472"/></g><g transform="translate(881.7 434.8) rotate(-28)"><rect x="-9.0" y="-15.0" width="18" height="30" fill="#757472"/></g><g transform="translate(908.2 463.5) rotate(40)"><rect x="-10.0" y="-10.0" width="20" height="20" fill="#757472"/></g><g transform="translate(926.0 480.0) rotate(40)"><rect x="-7.0" y="-7.0" width="14" height="14" fill="#757472"/></g><g transform="translate(565 451) rotate(-4)"><rect x="-12.500" y="-10.500" width="25" height="21" fill="#757472"/><path d="M-12.500 -10.500V10.500H12.500" fill="none" stroke="#5a5957" stroke-width=".8" stroke-dasharray="3 2"/></g><g transform="translate(580.8 483) rotate(-4)"><rect x="-12.500" y="-10.500" width="25" height="21" fill="#757472"/><path d="M-12.500 -10.500V10.500H12.500" fill="none" stroke="#5a5957" stroke-width=".8" stroke-dasharray="3 2"/></g><g transform="translate(600.8 515.5) rotate(-4)"><rect x="-12.500" y="-10.500" width="25" height="21" fill="#757472"/><path d="M-12.500 -10.500V10.500H12.500" fill="none" stroke="#5a5957" stroke-width=".8" stroke-dasharray="3 2"/></g><g transform="translate(622.3 547.8) rotate(-4)"><rect x="-12.500" y="-10.500" width="25" height="21" fill="#757472"/><path d="M-12.500 -10.500V10.500H12.500" fill="none" stroke="#5a5957" stroke-width=".8" stroke-dasharray="3 2"/></g><g transform="translate(642.3 580) rotate(-4)"><rect x="-12.500" y="-10.500" width="25" height="21" fill="#757472"/><path d="M-12.500 -10.500V10.500H12.500" fill="none" stroke="#5a5957" stroke-width=".8" stroke-dasharray="3 2"/></g><g transform="translate(611.6 418.5) rotate(-4)"><rect x="-12.500" y="-10.500" width="25" height="21" fill="#757472"/><path d="M-12.500 -10.500V10.500H12.500" fill="none" stroke="#5a5957" stroke-width=".8" stroke-dasharray="3 2"/></g><g transform="translate(631.6 450.8) rotate(-4)"><rect x="-12.500" y="-10.500" width="25" height="21" fill="#757472"/><path d="M-12.500 -10.500V10.500H12.500" fill="none" stroke="#5a5957" stroke-width=".8" stroke-dasharray="3 2"/></g><g transform="translate(651.6 483) rotate(-4)"><rect x="-12.500" y="-10.500" width="25" height="21" fill="#757472"/><path d="M-12.500 -10.500V10.500H12.500" fill="none" stroke="#5a5957" stroke-width=".8" stroke-dasharray="3 2"/></g><g transform="translate(671.6 515.5) rotate(-4)"><rect x="-12.500" y="-10.500" width="25" height="21" fill="#757472"/><path d="M-12.500 -10.500V10.500H12.500" fill="none" stroke="#5a5957" stroke-width=".8" stroke-dasharray="3 2"/></g><g transform="translate(691.6 546.2) rotate(-4)"><rect x="-12.500" y="-10.500" width="25" height="21" fill="#757472"/><path d="M-12.500 -10.500V10.500H12.500" fill="none" stroke="#5a5957" stroke-width=".8" stroke-dasharray="3 2"/></g><g transform="translate(674.6 409.3) rotate(-4)"><rect x="-12.500" y="-10.500" width="25" height="21" fill="#757472"/><path d="M-12.500 -10.500V10.500H12.500" fill="none" stroke="#5a5957" stroke-width=".8" stroke-dasharray="3 2"/></g><g transform="translate(696.2 441.6) rotate(-4)"><rect x="-12.500" y="-10.500" width="25" height="21" fill="#757472"/><path d="M-12.500 -10.500V10.500H12.500" fill="none" stroke="#5a5957" stroke-width=".8" stroke-dasharray="3 2"/></g><g transform="translate(714.7 473.9) rotate(-4)"><rect x="-12.500" y="-10.500" width="25" height="21" fill="#757472"/><path d="M-12.500 -10.500V10.500H12.500" fill="none" stroke="#5a5957" stroke-width=".8" stroke-dasharray="3 2"/></g><g transform="translate(734.7 506.2) rotate(-4)"><rect x="-12.500" y="-10.500" width="25" height="21" fill="#757472"/><path d="M-12.500 -10.500V10.500H12.500" fill="none" stroke="#5a5957" stroke-width=".8" stroke-dasharray="3 2"/></g><g transform="translate(756.2 537) rotate(-4)"><rect x="-12.500" y="-10.500" width="25" height="21" fill="#757472"/><path d="M-12.500 -10.500V10.500H12.500" fill="none" stroke="#5a5957" stroke-width=".8" stroke-dasharray="3 2"/></g><g transform="translate(744.7 391.3) rotate(-4)"><rect x="-12.500" y="-10.500" width="25" height="21" fill="#757472"/><path d="M-12.500 -10.500V10.500H12.500" fill="none" stroke="#5a5957" stroke-width=".8" stroke-dasharray="3 2"/></g><g transform="translate(760.8 424.7) rotate(-4)"><rect x="-12.500" y="-10.500" width="25" height="21" fill="#757472"/><path d="M-12.500 -10.500V10.500H12.500" fill="none" stroke="#5a5957" stroke-width=".8" stroke-dasharray="3 2"/></g><g transform="translate(777.8 455.4) rotate(-4)"><rect x="-12.500" y="-10.500" width="25" height="21" fill="#757472"/><path d="M-12.500 -10.500V10.500H12.500" fill="none" stroke="#5a5957" stroke-width=".8" stroke-dasharray="3 2"/></g><g transform="translate(793.1 487.8) rotate(-4)"><rect x="-12.500" y="-10.500" width="25" height="21" fill="#757472"/><path d="M-12.500 -10.500V10.500H12.500" fill="none" stroke="#5a5957" stroke-width=".8" stroke-dasharray="3 2"/></g><g transform="translate(808.5 384.6) rotate(-4)"><rect x="-12.500" y="-10.500" width="25" height="21" fill="#757472"/><path d="M-12.500 -10.500V10.500H12.500" fill="none" stroke="#5a5957" stroke-width=".8" stroke-dasharray="3 2"/></g><g transform="translate(822.4 418.5) rotate(-4)"><rect x="-12.500" y="-10.500" width="25" height="21" fill="#757472"/><path d="M-12.500 -10.500V10.500H12.500" fill="none" stroke="#5a5957" stroke-width=".8" stroke-dasharray="3 2"/></g><g transform="translate(837.8 450.8) rotate(-4)"><rect x="-12.500" y="-10.500" width="25" height="21" fill="#757472"/><path d="M-12.500 -10.500V10.500H12.500" fill="none" stroke="#5a5957" stroke-width=".8" stroke-dasharray="3 2"/></g><g transform="translate(859.3 481.6) rotate(-4)"><rect x="-12.500" y="-10.500" width="25" height="21" fill="#757472"/><path d="M-12.500 -10.500V10.500H12.500" fill="none" stroke="#5a5957" stroke-width=".8" stroke-dasharray="3 2"/></g><g transform="translate(878.0 540.0) rotate(-5)"><rect x="-47.5" y="-21.0" width="95" height="42" fill="#747371"/></g><g transform="translate(860.0 520.0) rotate(-5)"><rect x="-20.0" y="-9.0" width="40" height="18" fill="#747371"/></g><g transform="translate(833.0 610.0) rotate(-5)"><rect x="-28.0" y="-15.0" width="56" height="30" fill="#757472"/></g><g transform="translate(838.0 662.0) rotate(-5)"><rect x="-33.0" y="-11.0" width="66" height="22" fill="#757472"/></g><g transform="translate(722.0 655.0) rotate(40)"><rect x="-36.0" y="-18.0" width="72" height="36" fill="#757472"/></g><g transform="translate(595.0 613.0) rotate(38)"><rect x="-9.0" y="-7.0" width="18" height="14" fill="#757472"/></g><g transform="translate(612.0 640.0) rotate(38)"><rect x="-7.0" y="-5.0" width="14" height="10" fill="#757472"/></g><g transform="translate(652.0 665.0) rotate(38)"><rect x="-9.0" y="-8.0" width="18" height="16" fill="#757472"/></g><g transform="translate(682.0 720.0) rotate(38)"><rect x="-9.0" y="-7.0" width="18" height="14" fill="#757472"/></g><g transform="translate(776.0 693.0) rotate(38)"><rect x="-6.0" y="-5.0" width="12" height="10" fill="#757472"/><path d="M6.0 -5.0V5.0" stroke="#4a4947" stroke-width="1" /></g><g transform="translate(786.0 713.0) rotate(38)"><rect x="-10.0" y="-7.0" width="20" height="14" fill="#757472"/><path d="M10.0 -7.0V7.0" stroke="#4a4947" stroke-width="1" /></g><g transform="translate(764.0 725.0) rotate(25)"><rect x="-6.0" y="-9.0" width="12" height="18" fill="#757472"/><path d="M6.0 -9.0V9.0" stroke="#4a4947" stroke-width="1" /></g><g transform="translate(742.0 735.0) rotate(38)"><rect x="-5.0" y="-6.0" width="10" height="12" fill="#757472"/><path d="M5.0 -6.0V6.0" stroke="#4a4947" stroke-width="1" /></g><g transform="translate(752.0 750.0) rotate(38)"><rect x="-7.0" y="-6.0" width="14" height="12" fill="#757472"/><path d="M7.0 -6.0V6.0" stroke="#4a4947" stroke-width="1" /></g><g transform="translate(790.0 755.0) rotate(38)"><rect x="-9.0" y="-9.0" width="18" height="18" fill="#757472"/><path d="M9.0 -9.0V9.0" stroke="#4a4947" stroke-width="1" /></g><g transform="translate(793.0 760.0) rotate(38)"><rect x="-7.0" y="-6.0" width="14" height="12" fill="#757472"/><path d="M7.0 -6.0V6.0" stroke="#4a4947" stroke-width="1" /></g><g transform="translate(775.0 775.0) rotate(38)"><rect x="-10.0" y="-7.0" width="20" height="14" fill="#757472"/><path d="M10.0 -7.0V7.0" stroke="#4a4947" stroke-width="1" /></g><g transform="translate(845.0 778.0) rotate(38)"><rect x="-7.0" y="-8.0" width="14" height="16" fill="#757472"/><path d="M7.0 -8.0V8.0" stroke="#4a4947" stroke-width="1" /></g><g transform="translate(860.0 795.0) rotate(38)"><rect x="-9.0" y="-7.0" width="18" height="14" fill="#757472"/><path d="M9.0 -7.0V7.0" stroke="#4a4947" stroke-width="1" /></g><g transform="translate(800.0 805.0) rotate(38)"><rect x="-10.0" y="-8.0" width="20" height="16" fill="#757472"/><path d="M10.0 -8.0V8.0" stroke="#4a4947" stroke-width="1" /></g><g transform="translate(882.0 805.0) rotate(38)"><rect x="-8.0" y="-11.0" width="16" height="22" fill="#757472"/><path d="M8.0 -11.0V11.0" stroke="#4a4947" stroke-width="1" /></g><g transform="translate(850.0 830.0) rotate(38)"><rect x="-9.0" y="-6.0" width="18" height="12" fill="#757472"/><path d="M9.0 -6.0V6.0" stroke="#4a4947" stroke-width="1" /></g><g transform="translate(866.0 845.0) rotate(38)"><rect x="-7.0" y="-6.0" width="14" height="12" fill="#757472"/><path d="M7.0 -6.0V6.0" stroke="#4a4947" stroke-width="1" /></g><g transform="translate(828.0 845.0) rotate(38)"><rect x="-10.0" y="-8.0" width="20" height="16" fill="#757472"/><path d="M10.0 -8.0V8.0" stroke="#4a4947" stroke-width="1" /></g><g transform="translate(840.0 775.0) rotate(38)"><rect x="-7.0" y="-6.0" width="14" height="12" fill="#757472"/><path d="M7.0 -6.0V6.0" stroke="#4a4947" stroke-width="1" /></g><g transform="translate(852.0 700.0) rotate(-5)"><rect x="-13.0" y="-10.0" width="26" height="20" fill="#757472"/></g><g transform="translate(875.0 732.0) rotate(-5)"><rect x="-13.0" y="-10.0" width="26" height="20" fill="#757472"/></g><g transform="translate(898.0 765.0) rotate(-5)"><rect x="-13.0" y="-10.0" width="26" height="20" fill="#757472"/></g><g transform="translate(925.0 790.0) rotate(-5)"><rect x="-13.0" y="-10.0" width="26" height="20" fill="#757472"/></g><g transform="translate(918.0 640.0) rotate(-5)"><rect x="-7.0" y="-11.0" width="14" height="22" fill="#757472"/><path d="M7.0 -11.0V11.0" stroke="#4a4947" stroke-width="1" /></g><g transform="translate(288.0 508.0) rotate(-48)"><rect x="-22.0" y="-5.5" width="44" height="11" fill="#757472"/><path d="M22.0 -5.5V5.5" stroke="#4a4947" stroke-width="1" /></g><g transform="translate(305.0 524.0) rotate(-48)"><rect x="-22.0" y="-5.5" width="44" height="11" fill="#757472"/><path d="M22.0 -5.5V5.5" stroke="#4a4947" stroke-width="1" /></g><g transform="translate(322.0 540.0) rotate(-48)"><rect x="-22.0" y="-5.5" width="44" height="11" fill="#757472"/><path d="M22.0 -5.5V5.5" stroke="#4a4947" stroke-width="1" /></g><path d="M265.0 510.0 L302.0 468.0 L358.0 522.0 L320.0 562.0 L265.0 510.0" fill="none" stroke="#838382" stroke-width="1.2" stroke-linejoin="round" stroke-linecap="round" /><g transform="translate(262.0 560.0) rotate(42)"><rect x="-13.0" y="-6.0" width="26" height="12" fill="#757472"/><path d="M13.0 -6.0V6.0" stroke="#4a4947" stroke-width="1" /></g><g transform="translate(255.0 590.0) rotate(-48)"><rect x="-8.0" y="-25.0" width="16" height="50" fill="#757472"/><path d="M8.0 -25.0V25.0" stroke="#4a4947" stroke-width="1" /></g><g transform="translate(288.0 615.0) rotate(42)"><rect x="-35.0" y="-9.0" width="70" height="18" fill="#757472"/><path d="M35.0 -9.0V9.0" stroke="#4a4947" stroke-width="1" /></g><rect x="439.3" y="595.6" width="29" height="23.5" fill="#747371"/><path d="M441.3 596.1h27" stroke="#454442" stroke-width="1" stroke-dasharray="8 2 5 3" fill="none"/><path d="M465.7 595.6h3v8h-1v8.500h2v7.0h-2.800v-6.500h-1.600v-9h1.400z" fill="#403f3d"/><rect x="417.5" y="620.2" width="29" height="23.5" fill="#747371"/><path d="M419.5 620.8h27" stroke="#454442" stroke-width="1" stroke-dasharray="8 2 5 3" fill="none"/><path d="M443.9 620.2h3v8h-1v8.500h2v7.0h-2.800v-6.500h-1.600v-9h1.400z" fill="#403f3d"/><rect x="395.5" y="645.5" width="29" height="23.5" fill="#747371"/><path d="M397.5 646.0h27" stroke="#454442" stroke-width="1" stroke-dasharray="8 2 5 3" fill="none"/><path d="M421.9 645.5h3v8h-1v8.500h2v7.0h-2.800v-6.500h-1.600v-9h1.400z" fill="#403f3d"/><rect x="345.3" y="704.2" width="29" height="23.5" fill="#747371"/><path d="M347.3 704.8h27" stroke="#454442" stroke-width="1" stroke-dasharray="8 2 5 3" fill="none"/><path d="M371.7 704.2h3v8h-1v8.500h2v7.0h-2.800v-6.500h-1.600v-9h1.400z" fill="#403f3d"/><rect x="320.2" y="728.2" width="29" height="23.5" fill="#747371"/><path d="M322.2 728.8h27" stroke="#454442" stroke-width="1" stroke-dasharray="8 2 5 3" fill="none"/><path d="M346.6 728.2h3v8h-1v8.500h2v7.0h-2.800v-6.500h-1.600v-9h1.400z" fill="#403f3d"/><rect x="298.3" y="752.5" width="29" height="23.5" fill="#747371"/><path d="M300.3 753.0h27" stroke="#454442" stroke-width="1" stroke-dasharray="8 2 5 3" fill="none"/><path d="M324.7 752.5h3v8h-1v8.500h2v7.0h-2.800v-6.500h-1.600v-9h1.400z" fill="#403f3d"/><rect x="276.4" y="776.2" width="29" height="23.5" fill="#747371"/><path d="M278.4 776.8h27" stroke="#454442" stroke-width="1" stroke-dasharray="8 2 5 3" fill="none"/><path d="M302.8 776.2h3v8h-1v8.500h2v7.0h-2.800v-6.500h-1.600v-9h1.400z" fill="#403f3d"/><rect x="254.5" y="801.2" width="29" height="23.5" fill="#747371"/><path d="M256.5 801.8h27" stroke="#454442" stroke-width="1" stroke-dasharray="8 2 5 3" fill="none"/><path d="M280.9 801.2h3v8h-1v8.500h2v7.0h-2.800v-6.500h-1.600v-9h1.400z" fill="#403f3d"/><rect x="553.5" y="830" width="26" height="26" fill="#747371"/><path d="M553.5 831.5l26 -1.500" stroke="#403f3d" stroke-width="4.500" stroke-dasharray="9 1 6 1 12" fill="none"/><path d="M578.5 831v22" stroke="#403f3d" stroke-width="2" fill="none"/><rect x="531.6" y="848" width="26" height="26" fill="#747371"/><path d="M531.6 849.5l26 -1.500" stroke="#403f3d" stroke-width="4.500" stroke-dasharray="9 1 6 1 12" fill="none"/><path d="M556.6 849v22" stroke="#403f3d" stroke-width="2" fill="none"/><path d="M456.0 667.0 L573.0 772.0" fill="none" stroke="#737270" stroke-width="13" stroke-linejoin="round" stroke-linecap="butt" /><path d="M461.0 657.0 L462.7 658.4 L462.7 658.4 L464.4 659.8 L465.1 658.9 L466.8 660.3 L466.8 660.3 L468.5 661.8 L467.7 662.7 L469.4 664.1 L469.4 664.1 L471.1 665.5 L472.0 664.4 L473.7 665.8 L473.7 665.8 L475.4 667.3 L474.5 668.3 L476.1 669.8 L476.1 669.8 L477.8 671.2 L478.2 670.8 L479.8 672.2 L479.8 672.2 L481.5 673.6 L482.0 673.0 L483.7 674.5 L483.7 674.5 L485.4 675.9 L485.1 676.2 L486.8 677.6 L486.8 677.6 L488.5 679.0 L488.7 678.7 L490.4 680.2 L490.4 680.2 L492.1 681.6 L492.1 681.6 L493.8 683.0 L493.8 683.0 L495.4 684.4 L494.7 685.3 L496.3 686.8 L496.3 686.8 L498.0 688.2 L498.4 687.7 L500.1 689.2 L500.1 689.2 L501.7 690.6 L501.7 690.6 L503.4 692.0 L503.4 692.0 L505.1 693.5 L504.6 694.0 L506.3 695.4 L506.3 695.4 L508.0 696.9 L508.6 696.1 L510.3 697.5 L510.3 697.5 L512.0 698.9 L511.7 699.2 L513.4 700.7 L513.4 700.7 L515.1 702.1 L515.6 701.5 L517.3 702.9 L517.3 702.9 L519.0 704.3 L518.0 705.4 L519.7 706.9 L519.7 706.9 L521.3 708.3 L521.8 707.7 L523.5 709.1 L523.5 709.1 L525.2 710.6 L524.9 710.9 L526.6 712.3 L526.6 712.3 L528.2 713.8 L528.4 713.6 L530.0 715.0 L530.0 715.0 L531.7 716.5 L531.4 716.8 L533.1 718.2 L533.1 718.2 L534.8 719.7 L535.5 718.8 L537.2 720.2 L537.2 720.2 L538.9 721.6 L538.1 722.5 L539.8 724.0 L539.8 724.0 L541.5 725.4 L541.9 724.9 L543.5 726.3 L543.5 726.3 L545.2 727.8 L545.1 728.0 L546.7 729.4 L546.7 729.4 L548.4 730.8 L548.8 730.4 L550.5 731.8 L550.5 731.8 L552.1 733.2 L552.1 733.2 L553.8 734.6 L553.8 734.6 L555.5 736.0 L555.6 736.0 L557.3 737.4 L557.3 737.4 L558.9 738.8 L558.9 738.9 L560.5 740.3 L560.5 740.3 L562.2 741.7 L561.8 742.2 L563.5 743.6 L563.5 743.6 L565.2 745.0 L565.7 744.4 L567.4 745.8 L567.4 745.8 L569.1 747.3 L568.5 747.9 L570.2 749.3 L570.2 749.3 L571.9 750.8 L572.2 750.3 L573.9 751.8 L573.9 751.8 L575.6 753.2 L575.0 753.8 L576.7 755.3 L576.7 755.3 L578.4 756.7 L578.7 756.3 L580.4 757.7 L580.4 757.7 L582.1 759.1 L579.8 761.9 L578.1 760.4 L578.1 760.4 L576.4 759.0 L577.7 757.4 L576.1 756.0 L576.1 756.0 L574.4 754.6 L572.7 756.5 L571.1 755.1 L571.1 755.1 L569.4 753.7 L570.0 753.0 L568.3 751.5 L568.3 751.5 L566.6 750.1 L567.3 749.3 L565.7 747.9 L565.7 747.9 L564.0 746.4 L562.7 747.9 L561.1 746.5 L561.1 746.5 L559.4 745.1 L559.4 745.0 L557.7 743.6 L557.7 743.6 L556.1 742.2 L557.6 740.3 L556.0 738.9 L556.0 738.9 L554.3 737.5 L554.3 737.4 L552.6 736.0 L552.6 736.0 L551.0 734.6 L549.7 736.0 L548.1 734.6 L548.1 734.6 L546.4 733.2 L546.5 733.0 L544.9 731.6 L544.9 731.6 L543.2 730.2 L542.7 730.7 L541.0 729.3 L541.0 729.3 L539.4 727.8 L540.7 726.3 L539.0 724.8 L539.0 724.8 L537.4 723.4 L536.1 724.9 L534.4 723.5 L534.4 723.5 L532.7 722.1 L533.3 721.4 L531.6 720.0 L531.6 720.0 L530.0 718.5 L529.4 719.2 L527.7 717.8 L527.7 717.8 L526.0 716.4 L526.5 715.8 L524.8 714.4 L524.8 714.4 L523.2 713.0 L522.4 713.8 L520.7 712.4 L520.7 712.4 L519.1 711.0 L521.3 708.4 L519.6 706.9 L519.6 706.9 L517.9 705.5 L517.1 706.4 L515.5 705.0 L515.5 705.0 L513.8 703.6 L513.1 704.4 L511.4 703.0 L511.4 703.0 L509.8 701.5 L510.6 700.6 L508.9 699.2 L508.9 699.2 L507.2 697.8 L506.2 698.9 L504.5 697.5 L504.5 697.5 L502.9 696.1 L503.6 695.2 L501.9 693.8 L501.9 693.8 L500.2 692.4 L499.0 693.9 L497.3 692.4 L497.3 692.4 L495.6 691.0 L496.1 690.4 L494.5 689.0 L494.5 689.0 L492.8 687.6 L492.7 687.7 L491.0 686.2 L491.0 686.2 L489.3 684.8 L489.7 684.4 L488.0 683.0 L488.0 683.0 L486.3 681.6 L485.8 682.2 L484.1 680.8 L484.1 680.8 L482.4 679.4 L482.5 679.3 L480.8 677.9 L480.8 677.9 L479.1 676.4 L479.9 675.5 L478.3 674.0 L478.3 674.0 L476.6 672.6 L476.0 673.3 L474.3 671.9 L474.3 671.9 L472.7 670.4 L472.9 670.2 L471.2 668.7 L471.2 668.7 L469.5 667.3 L471.0 665.6 L469.3 664.2 L469.3 664.2 L467.6 662.8 L465.7 665.1 L464.0 663.6 L464.0 663.6 L462.3 662.2 L464.3 659.9 L462.6 658.5 L462.6 658.5 L460.9 657.1Z" fill="#403f3d"/><path d="M626.0 788.0 L728.0 875.0" fill="none" stroke="#737270" stroke-width="14" stroke-linejoin="round" stroke-linecap="butt" /><path d="M627.0 777.8 L628.7 779.2 L628.7 779.2 L630.4 780.6 L629.8 781.3 L631.5 782.7 L631.5 782.7 L633.2 784.1 L633.1 784.3 L634.8 785.7 L634.8 785.7 L636.5 787.1 L636.8 786.6 L638.5 788.0 L638.5 788.0 L640.2 789.4 L639.9 789.8 L641.6 791.2 L641.6 791.2 L643.3 792.6 L643.6 792.3 L645.3 793.7 L645.3 793.7 L647.0 795.1 L646.4 795.7 L648.1 797.1 L648.1 797.1 L649.8 798.5 L649.8 798.5 L651.5 799.9 L651.5 799.9 L653.2 801.3 L653.7 800.7 L655.4 802.1 L655.4 802.1 L657.1 803.5 L657.3 803.3 L659.0 804.7 L659.0 804.7 L660.7 806.1 L660.8 805.9 L662.5 807.3 L662.5 807.3 L664.2 808.7 L663.5 809.6 L665.2 811.0 L665.2 811.0 L666.9 812.4 L667.0 812.3 L668.7 813.7 L668.7 813.7 L670.4 815.1 L670.9 814.5 L672.6 815.9 L672.6 815.9 L674.3 817.3 L674.7 816.8 L676.4 818.2 L676.4 818.2 L678.1 819.6 L677.3 820.6 L679.0 822.0 L679.0 822.0 L680.7 823.4 L680.5 823.5 L682.3 824.9 L682.3 824.9 L684.0 826.3 L684.8 825.3 L686.5 826.7 L686.5 826.7 L688.2 828.1 L687.3 829.2 L689.0 830.5 L689.0 830.5 L690.7 831.9 L691.2 831.3 L692.9 832.7 L692.9 832.7 L694.7 834.1 L694.1 834.7 L695.8 836.1 L695.8 836.1 L697.5 837.5 L697.8 837.2 L699.5 838.5 L699.5 838.5 L701.2 839.9 L701.2 839.9 L703.0 841.3 L703.0 841.3 L704.7 842.7 L705.1 842.1 L706.8 843.5 L706.8 843.5 L708.5 844.9 L707.9 845.6 L709.6 847.0 L709.6 847.0 L711.3 848.4 L711.6 848.1 L713.3 849.5 L713.3 849.5 L715.0 850.9 L715.4 850.5 L717.1 851.8 L717.1 851.8 L718.8 853.2 L717.9 854.2 L719.6 855.6 L719.6 855.6 L721.4 857.0 L721.4 856.9 L723.1 858.3 L723.1 858.3 L724.8 859.7 L725.4 859.0 L727.1 860.4 L727.1 860.4 L728.8 861.8 L728.6 862.0 L730.3 863.4 L730.3 863.4 L732.0 864.8 L731.6 865.4 L733.3 866.8 L733.3 866.8 L735.0 868.2 L735.4 867.6 L737.1 869.0 L736.2 870.1 L734.5 868.7 L733.0 870.6 L731.3 869.2 L731.3 869.2 L729.6 867.8 L729.5 868.0 L727.8 866.6 L727.8 866.6 L726.1 865.2 L727.4 863.5 L725.7 862.1 L725.7 862.1 L724.0 860.7 L723.7 861.1 L722.0 859.7 L722.0 859.7 L720.3 858.3 L721.3 857.1 L719.6 855.7 L719.6 855.7 L717.9 854.3 L716.3 856.2 L714.6 854.8 L714.6 854.8 L712.9 853.4 L713.2 853.1 L711.4 851.7 L711.4 851.7 L709.7 850.4 L710.5 849.5 L708.8 848.1 L708.8 848.1 L707.1 846.7 L705.5 848.6 L703.8 847.2 L703.8 847.2 L702.1 845.8 L703.6 844.0 L701.8 842.6 L701.8 842.6 L700.1 841.2 L699.9 841.5 L698.2 840.1 L698.2 840.1 L696.5 838.7 L696.7 838.5 L695.0 837.1 L695.0 837.1 L693.3 835.7 L693.7 835.2 L692.0 833.8 L692.0 833.8 L690.3 832.4 L690.6 832.0 L688.9 830.6 L688.9 830.6 L687.2 829.2 L686.5 830.2 L684.8 828.8 L684.8 828.8 L683.1 827.4 L683.3 827.1 L681.6 825.7 L681.6 825.7 L679.9 824.3 L680.0 824.2 L678.2 822.8 L678.2 822.8 L676.5 821.4 L675.8 822.4 L674.1 821.0 L674.1 821.0 L672.4 819.6 L672.8 819.1 L671.1 817.7 L671.1 817.7 L669.4 816.3 L669.7 816.0 L668.0 814.6 L668.0 814.6 L666.2 813.2 L666.8 812.5 L665.1 811.1 L665.1 811.1 L663.4 809.7 L661.2 812.4 L659.5 811.0 L659.5 811.0 L657.8 809.6 L659.6 807.4 L657.9 806.0 L657.9 806.0 L656.2 804.6 L654.7 806.4 L653.0 805.0 L653.0 805.0 L651.3 803.6 L653.2 801.4 L651.5 800.0 L651.5 800.0 L649.8 798.6 L649.8 798.6 L648.1 797.2 L648.1 797.2 L646.4 795.8 L645.6 796.7 L643.9 795.3 L643.9 795.3 L642.2 793.9 L641.0 795.4 L639.3 794.0 L639.3 794.0 L637.6 792.6 L638.8 791.2 L637.1 789.8 L637.1 789.8 L635.4 788.4 L634.5 789.4 L632.8 788.0 L632.8 788.0 L631.1 786.6 L632.1 785.4 L630.4 784.0 L630.4 784.0 L628.7 782.6 L628.0 783.6 L626.3 782.2 L626.3 782.2 L624.6 780.8Z" fill="#403f3d"/><path d="M645.0 330.0 L662.0 355.0 L680.0 345.0" fill="none" stroke="#55524f" stroke-width="1.6" stroke-linejoin="round" stroke-linecap="round" stroke-dasharray="2 1.500"/><path d="M214.0 752.0 L216.0 753.3 L216.0 753.3 L218.0 754.6 L218.9 753.2 L220.9 754.5 L220.9 754.5 L222.9 755.8 L222.1 757.2 L224.1 758.4 L224.1 758.4 L226.1 759.7 L226.4 759.4 L228.4 760.6 L228.4 760.6 L230.4 761.9 L230.5 761.9 L232.5 763.2 L232.5 763.2 L234.5 764.5 L235.0 763.8 L237.0 765.1 L234.5 768.9 L232.5 767.6 L233.5 766.0 L231.5 764.7 L231.5 764.7 L229.5 763.4 L228.4 765.1 L226.4 763.8 L226.4 763.8 L224.4 762.5 L226.1 759.8 L224.1 758.5 L224.1 758.5 L222.0 757.2 L220.5 759.7 L218.5 758.4 L218.5 758.4 L216.5 757.1 L218.0 754.7 L216.0 753.4 L216.0 753.4 L213.9 752.1Z" fill="#403f3d"/><text x="0" y="0" transform="translate(413 371.5) rotate(41.6)" text-anchor="middle" dominant-baseline="central" font-family="DejaVu Sans Condensed,DejaVu Sans,sans-serif" font-size="12" fill="#454341" stroke="#7e7d7b" stroke-width="1.600" paint-order="stroke" >Mázoló utca</text><text x="0" y="0" transform="translate(353.5 462.3) rotate(41.6)" text-anchor="middle" dominant-baseline="central" font-family="DejaVu Sans Condensed,DejaVu Sans,sans-serif" font-size="12" fill="#454341" stroke="#7e7d7b" stroke-width="1.600" paint-order="stroke" >Erdősor utca</text><text x="0" y="0" transform="translate(477 496.8) rotate(-46.6)" text-anchor="middle" dominant-baseline="central" font-family="DejaVu Sans Condensed,DejaVu Sans,sans-serif" font-size="12" fill="#454341" stroke="#7e7d7b" stroke-width="1.600" paint-order="stroke" >Fémmű utca</text><text x="0" y="0" transform="translate(480 558.2) rotate(0)" text-anchor="middle" dominant-baseline="central" font-family="DejaVu Sans Condensed,DejaVu Sans,sans-serif" font-size="10" fill="#3a3836" stroke="#7e7d7b" stroke-width="1.600" paint-order="stroke" font-style="italic" letter-spacing=".7">CSEPEL-ERDŐSOR</text><text x="0" y="0" transform="translate(539 629.6) rotate(42.4)" text-anchor="middle" dominant-baseline="central" font-family="DejaVu Sans Condensed,DejaVu Sans,sans-serif" font-size="12" fill="#454341" stroke="#7e7d7b" stroke-width="1.600" paint-order="stroke" >Erdősor utca</text><text x="0" y="0" transform="translate(603.5 635.9) rotate(-42)" text-anchor="middle" dominant-baseline="central" font-family="DejaVu Sans Condensed,DejaVu Sans,sans-serif" font-size="12" fill="#454341" stroke="#7e7d7b" stroke-width="1.600" paint-order="stroke" >Szén utca</text><text x="0" y="0" transform="translate(659.3 651.5) rotate(52.5)" text-anchor="middle" dominant-baseline="central" font-family="DejaVu Sans Condensed,DejaVu Sans,sans-serif" font-size="12" fill="#454341" stroke="#7e7d7b" stroke-width="1.600" paint-order="stroke" >Mázoló utca</text><text x="0" y="0" transform="translate(668.7 456) rotate(55.5)" text-anchor="middle" dominant-baseline="central" font-family="DejaVu Sans Condensed,DejaVu Sans,sans-serif" font-size="12" fill="#454341" stroke="#7e7d7b" stroke-width="1.600" paint-order="stroke" >Kőrösi Sándor utca</text><text x="0" y="0" transform="translate(733.8 419.7) rotate(62.6)" text-anchor="middle" dominant-baseline="central" font-family="DejaVu Sans Condensed,DejaVu Sans,sans-serif" font-size="12" fill="#454341" stroke="#7e7d7b" stroke-width="1.600" paint-order="stroke" >Szent László utca</text><text x="0" y="0" transform="translate(829 372) rotate(60.8)" text-anchor="middle" dominant-baseline="central" font-family="DejaVu Sans Condensed,DejaVu Sans,sans-serif" font-size="12" fill="#454341" stroke="#7e7d7b" stroke-width="1.600" paint-order="stroke" >Kapos utca</text><text x="0" y="0" transform="translate(792 672.8) rotate(54.5)" text-anchor="middle" dominant-baseline="central" font-family="DejaVu Sans Condensed,DejaVu Sans,sans-serif" font-size="12" fill="#454341" stroke="#7e7d7b" stroke-width="1.600" paint-order="stroke" >Kőrösi Sándor utca</text><text x="0" y="0" transform="translate(878 665) rotate(-4)" text-anchor="middle" dominant-baseline="central" font-family="DejaVu Sans Condensed,DejaVu Sans,sans-serif" font-size="13.5" fill="#454341" stroke="#7e7d7b" stroke-width="1.600" paint-order="stroke" >Csille utca</text><text x="0" y="0" transform="translate(757.6 785.6) rotate(49)" text-anchor="middle" dominant-baseline="central" font-family="DejaVu Sans Condensed,DejaVu Sans,sans-serif" font-size="12" fill="#454341" stroke="#7e7d7b" stroke-width="1.600" paint-order="stroke" >Erdősor utca</text><text x="0" y="0" transform="translate(312.8 624.6) rotate(42.3)" text-anchor="middle" dominant-baseline="central" font-family="DejaVu Sans Condensed,DejaVu Sans,sans-serif" font-size="12" fill="#454341" stroke="#7e7d7b" stroke-width="1.600" paint-order="stroke" >Csikó sétány</text><text x="0" y="0" transform="translate(328.4 798.8) rotate(-46)" text-anchor="middle" dominant-baseline="central" font-family="DejaVu Sans Condensed,DejaVu Sans,sans-serif" font-size="12" fill="#454341" stroke="#7e7d7b" stroke-width="1.600" paint-order="stroke" >Cirmos sétány</text><text x="0" y="0" transform="translate(222 452) rotate(-46)" text-anchor="middle" dominant-baseline="central" font-family="DejaVu Sans Condensed,DejaVu Sans,sans-serif" font-size="12" fill="#454341" stroke="#7e7d7b" stroke-width="1.600" paint-order="stroke" >Csikó sétány</text><text x="0" y="0" transform="translate(950 866) rotate(45)" text-anchor="middle" dominant-baseline="central" font-family="DejaVu Sans Condensed,DejaVu Sans,sans-serif" font-size="12" fill="#454341" stroke="#7e7d7b" stroke-width="1.600" paint-order="stroke" >Kőrösi Sándor utca</text><text x="308" y="365.8" text-anchor="end" dominant-baseline="central" font-family="DejaVu Sans Condensed,DejaVu Sans,sans-serif" font-style="italic" font-size="11.5" fill="#214876" stroke="#7e7d7b" stroke-width="1.400" paint-order="stroke">Csikó sétány</text><text x="276.8" y="448" text-anchor="middle" dominant-baseline="central" font-family="DejaVu Sans Condensed,DejaVu Sans,sans-serif" font-style="italic" font-size="11.5" fill="#504845" stroke="#7e7d7b" stroke-width="1.400" paint-order="stroke">easybox</text><text x="292.7" y="720" text-anchor="end" dominant-baseline="central" font-family="DejaVu Sans Condensed,DejaVu Sans,sans-serif" font-style="italic" font-size="11.5" fill="#504845" stroke="#7e7d7b" stroke-width="1.400" paint-order="stroke">Wagner Mária park</text><text x="662" y="711" text-anchor="middle" dominant-baseline="central" font-family="DejaVu Sans Condensed,DejaVu Sans,sans-serif" font-style="italic" font-size="11.5" fill="#214876" stroke="#7e7d7b" stroke-width="1.400" paint-order="stroke">Csille utca</text><text x="900" y="577" text-anchor="middle" dominant-baseline="central" font-family="DejaVu Sans Condensed,DejaVu Sans,sans-serif" font-style="italic" font-size="11.5" fill="#504845" stroke="#7e7d7b" stroke-width="1.400" paint-order="stroke">Arany János</text><text x="905" y="591.5" text-anchor="middle" dominant-baseline="central" font-family="DejaVu Sans Condensed,DejaVu Sans,sans-serif" font-style="italic" font-size="11.5" fill="#504845" stroke="#7e7d7b" stroke-width="1.400" paint-order="stroke">Általános Iskola</text><text x="848.5" y="634" text-anchor="middle" dominant-baseline="central" font-family="DejaVu Sans Condensed,DejaVu Sans,sans-serif" font-style="italic" font-size="11.5" fill="#504845" stroke="#7e7d7b" stroke-width="1.400" paint-order="stroke">Foxpost HU5127</text><text x="600.5" y="862" text-anchor="middle" dominant-baseline="central" font-family="DejaVu Sans Condensed,DejaVu Sans,sans-serif" font-style="italic" font-size="11.5" fill="#504845" stroke="#7e7d7b" stroke-width="1.400" paint-order="stroke">easybox</text><text x="924" y="694" text-anchor="start" dominant-baseline="central" font-family="DejaVu Sans Condensed,DejaVu Sans,sans-serif" font-style="italic" font-size="11.5" fill="#214876" stroke="#7e7d7b" stroke-width="1.400" paint-order="stroke">utca</text><g transform="translate(276.4 434.5)"><circle r="10" fill="#858483" stroke="#6f6e6c" stroke-width="1"/><path d="M-6.500 -4.500h13v9h-13z" fill="#3b2d28"/><path d="M-6 -4l6 4.600 6-4.600" stroke="#858483" stroke-width="1.300" fill="none"/></g><g transform="translate(848.5 618.3)"><circle r="10" fill="#858483" stroke="#6f6e6c" stroke-width="1"/><path d="M-6.500 -4.500h13v9h-13z" fill="#3b2d28"/><path d="M-6 -4l6 4.600 6-4.600" stroke="#858483" stroke-width="1.300" fill="none"/></g><g transform="translate(599.7 846.6)"><circle r="10" fill="#858483" stroke="#6f6e6c" stroke-width="1"/><path d="M-6.500 -4.500h13v9h-13z" fill="#3b2d28"/><path d="M-6 -4l6 4.600 6-4.600" stroke="#858483" stroke-width="1.300" fill="none"/></g><g transform="translate(243.9 704.2)"><circle r="10" fill="#858483" stroke="#6f6e6c" stroke-width="1"/><path d="M0 -7c-4 0-6 2.500-6 5 0 2 1.500 3.500 4 3.500h4c2.500 0 4-1.500 4-3.500 0-2.500-2-5-6-5z" fill="#3d6a16"/><path d="M-1 1h2v6h-2z" fill="#3d6a16"/></g><g transform="translate(900 562)"><circle r="10" fill="#858483" stroke="#6f6e6c" stroke-width="1"/><path d="M-5 -6h4v9l-2 3-2-3zM1 -6h4v12h-4z" fill="#3b2d28"/></g><g transform="translate(921.8 507.4)"><rect x="-9.500" y="-9.500" width="19" height="19" fill="#264f8c"/><text x="0" y="0.500" text-anchor="middle" dominant-baseline="central" font-family="Liberation Sans,sans-serif" font-weight="bold" font-size="15" fill="#9aa0a8">P</text></g><g transform="translate(707.5 807)"><rect x="-9.500" y="-9.500" width="19" height="19" fill="#264f8c"/><text x="0" y="0.500" text-anchor="middle" dominant-baseline="central" font-family="Liberation Sans,sans-serif" font-weight="bold" font-size="15" fill="#9aa0a8">P</text></g><g transform="translate(913.7 686)"><rect x="-6.500" y="-6.500" width="13" height="13" rx="1.500" fill="#275494"/><path d="M-3.500 -4h7v5.500h-7z" fill="#8a94a2"/><path d="M-3.500 2.500h7v1.200h-7z" fill="#8a94a2"/><circle cx="-2.300" cy="4.500" r=".9" fill="#8a94a2"/><circle cx="2.300" cy="4.500" r=".9" fill="#8a94a2"/></g><g transform="translate(625.4 711)"><rect x="-6.500" y="-6.500" width="13" height="13" rx="1.500" fill="#275494"/><path d="M-3.500 -4h7v5.500h-7z" fill="#8a94a2"/><path d="M-3.500 2.500h7v1.200h-7z" fill="#8a94a2"/><circle cx="-2.300" cy="4.500" r=".9" fill="#8a94a2"/><circle cx="2.300" cy="4.500" r=".9" fill="#8a94a2"/></g><g transform="translate(232.6 365.8)"><rect x="-6.500" y="-6.500" width="13" height="13" rx="1.500" fill="#275494"/><path d="M-3.500 -4h7v5.500h-7z" fill="#8a94a2"/><path d="M-3.500 2.500h7v1.200h-7z" fill="#8a94a2"/><circle cx="-2.300" cy="4.500" r=".9" fill="#8a94a2"/><circle cx="2.300" cy="4.500" r=".9" fill="#8a94a2"/></g><g transform="translate(576 583.500)"><path d="M0 0C-1.500 -9 -8.500 -14 -8.500 -22a8.500 8.500 0 0 1 17 0C8.500 -14 1.500 -9 0 0z" fill="#b23333" stroke="#8a2828" stroke-width=".8"/><circle cx="0" cy="-22" r="3.200" fill="#8a8783"/></g></svg><div class="bx" style="left:12px;top:11px;width:30px;height:91px;border-radius:4px;background:#838383;border:1px solid #666564"></div><div class="a" style="left:13px;top:41px;width:28px;height:1px;background:#6b6b6b"></div><div class="a" style="left:13px;top:71px;width:28px;height:1px;background:#6b6b6b"></div><div class="t" style="left:12px;top:12px;width:30px;text-align:center;font:700 22px/28px 'Liberation Sans',sans-serif;color:#111">+</div><div class="t" style="left:12px;top:41px;width:30px;text-align:center;font:700 22px/28px 'Liberation Sans',sans-serif;color:#111">−</div><svg class="ic" style="left:15px;top:74px;width:24px;height:24px" viewBox="0 0 24 24"><path fill="#111" d="M7 14H5v5h5v-2H7v-3zm-2-4h2V7h3V5H5v5zm12 7h-3v2h5v-5h-2v3zM14 5v2h3v3h2V5h-5z"/></svg><div class="bx" style="left:5px;top:540.500px;width:62px;height:16px;border:2px solid #464646;border-top:none;background:rgba(140,140,140,.45)"></div><div class="t" style="left:12px;top:540.500px;font-size:11.500px;line-height:14px;color:#1c1c1c">50 m</div><div class="a" style="left:651px;top:545px;width:61px;height:17px;background:#878787"></div><svg class="ic" style="left:656px;top:549px;width:12px;height:8px" viewBox="0 0 12 8"><path fill="#2d5796" d="M0 0h12v4H0z"/><path fill="#9a8a20" d="M0 4h12v4H0z"/></svg><div class="t" style="left:671px;top:546px;font-size:12px;line-height:15px;color:#174f72">Leaflet</div></div>
<div class="a" style="left:948px;top:76px;width:712px;height:791px;border-radius:4px;background:#828282;box-shadow:0 1px 4px rgba(0,0,0,.35)"></div>
<div class="t m" style="left:958.5px;top:94.5px;font-size:16px;line-height:20px;color:#1d1d1d;font-weight:400;letter-spacing:-.1px">Válaszd ki a Céget / Címet</div>
<svg class="ic" style="left:1161px;top:92.5px;width:24px;height:24px;" viewBox="0 0 24 24"><path fill="#20687c" d="M11 7h2v2h-2zm0 4h2v6h-2zm1-9C6.48 2 2 6.48 2 12s4.48 10 10 10 10-4.48 10-10S17.52 2 12 2zm0 18c-4.41 0-8-3.59-8-8s3.59-8 8-8 8 3.59 8 8-3.59 8-8 8z"/></svg>
<div class="t m" style="left:1189.5px;top:94.5px;font-size:16px;line-height:20px;color:#1d1d1d;font-weight:400;letter-spacing:-.2px">Szűrők:</div>
<div class="bx" style="left:1251px;top:97px;width:16px;height:16px;border:2px solid #474747;border-radius:2px"></div>
<div class="t " style="left:1275.5px;top:94.5px;font-size:16px;line-height:20px;color:#4a4a4a;font-weight:400;letter-spacing:-.3px">Cégek (0)</div>
<div class="bx" style="left:1360px;top:97px;width:16px;height:16px;border:2px solid #474747;border-radius:2px"></div>
<div class="t " style="left:1384.5px;top:94.5px;font-size:16px;line-height:20px;color:#4a4a4a;font-weight:400;letter-spacing:-.15px">Cégek telephelyei (0)</div>
<div class="a" style="left:1548px;top:97px;width:16px;height:16px;border-radius:2px;background:#a53f3f"></div>
<svg class="ic" style="left:1548px;top:97px;width:16px;height:16px" viewBox="0 0 16 16"><path fill="none" stroke="#b5b5b5" stroke-width="1.500" d="M3 8.500l3.300 3.300L13.200 4.700"/></svg>
<div class="t " style="left:1572.5px;top:94.5px;font-size:16px;line-height:20px;color:#1f1f1f;font-weight:400;letter-spacing:-.2px">Címek (86)</div>
<div class="a" style="left:948px;top:133px;width:712px;height:1px;background:#707070"></div>
<div class="a" style="left:948px;top:134px;width:712px;height:733px;overflow:hidden;border-radius:0 0 4px 4px"><div class="a" style="left:-948px;top:-134px">
<div class="a" style="left:948px;top:140.5px;width:702px;height:64px;background:#7f7f7f"></div>
<div class="a" style="left:948px;top:268.5px;width:702px;height:64px;background:#7f7f7f"></div>
<div class="a" style="left:948px;top:396.5px;width:702px;height:64px;background:#7f7f7f"></div>
<div class="a" style="left:948px;top:524.5px;width:702px;height:64px;background:#7f7f7f"></div>
<div class="a" style="left:948px;top:652.5px;width:702px;height:64px;background:#7f7f7f"></div>
<div class="a" style="left:948px;top:780.5px;width:702px;height:64px;background:#7f7f7f"></div>
<div class="a" style="left:958px;top:449px;width:696px;height:87px;background:#fafafa"></div>
<div class="a" style="left:948px;top:461px;width:10px;height:64px;background:#737373"></div>
<div class="a" style="left:958px;top:461px;width:692px;height:64px;background:#e6e6e6"></div>
<div class="t " style="left:980.5px;top:154.5px;font-size:16px;line-height:20px;color:#1a1a1a;font-weight:400;letter-spacing:-.11px">Budapest, Erdősor utca 170, 1213 Magyarország</div><div class="t " style="left:980.5px;top:174.7px;font-size:14px;line-height:18px;color:#3b3b3b;font-weight:400;letter-spacing:-.1px">Budapest, Erdősor utca 170, 1213 Magyarország</div><div class="a" style="left:1540px;top:149.0px;width:28px;height:28px;border-radius:50%;background:#823333"></div><svg class="ic" style="left:1546px;top:155.0px;width:16px;height:16px;" viewBox="0 0 24 24"><path fill="#a8a8a8" d="M9 16.17L4.83 12l-1.42 1.41L9 19 21 7l-1.41-1.41z"/></svg><div class="a" style="left:1598px;top:149.0px;width:28px;height:28px;border-radius:50%;background:#2a5869;box-shadow:0 2px 4px rgba(0,0,0,.3)"></div><svg class="ic" style="left:1604px;top:155.0px;width:16px;height:16px;" viewBox="0 0 24 24"><path fill="#a8a8a8" d="M12 4.5C7 4.5 2.73 7.61 1 12c1.73 4.39 6 7.5 11 7.5s9.27-3.11 11-7.5c-1.73-4.39-6-7.5-11-7.5zM12 17c-2.76 0-5-2.24-5-5s2.24-5 5-5 5 2.24 5 5-2.24 5-5 5zm0-8c-1.66 0-3 1.34-3 3s1.34 3 3 3 3-1.34 3-3-1.34-3-3-3z"/></svg><div class="t " style="left:1527.5px;top:185.8px;font-size:13px;line-height:16px;color:#3a3a3a;font-weight:400;letter-spacing:.15px">Kiválaszt</div><div class="t " style="left:1589.5px;top:185.8px;font-size:13px;line-height:16px;color:#3a3a3a;font-weight:400;letter-spacing:.2px">Mutasd</div>
<div class="t " style="left:980.5px;top:218.5px;font-size:16px;line-height:20px;color:#1a1a1a;font-weight:400;letter-spacing:-.11px">Budapest, Erdősor utca 158, 1213 Magyarország</div><div class="t " style="left:980.5px;top:238.7px;font-size:14px;line-height:18px;color:#3b3b3b;font-weight:400;letter-spacing:-.1px">Budapest, Erdősor utca 158, 1213 Magyarország</div><div class="a" style="left:1540px;top:213.0px;width:28px;height:28px;border-radius:50%;background:#823333"></div><svg class="ic" style="left:1546px;top:219.0px;width:16px;height:16px;" viewBox="0 0 24 24"><path fill="#a8a8a8" d="M9 16.17L4.83 12l-1.42 1.41L9 19 21 7l-1.41-1.41z"/></svg><div class="a" style="left:1598px;top:213.0px;width:28px;height:28px;border-radius:50%;background:#2a5869;box-shadow:0 2px 4px rgba(0,0,0,.3)"></div><svg class="ic" style="left:1604px;top:219.0px;width:16px;height:16px;" viewBox="0 0 24 24"><path fill="#a8a8a8" d="M12 4.5C7 4.5 2.73 7.61 1 12c1.73 4.39 6 7.5 11 7.5s9.27-3.11 11-7.5c-1.73-4.39-6-7.5-11-7.5zM12 17c-2.76 0-5-2.24-5-5s2.24-5 5-5 5 2.24 5 5-2.24 5-5 5zm0-8c-1.66 0-3 1.34-3 3s1.34 3 3 3 3-1.34 3-3-1.34-3-3-3z"/></svg><div class="t " style="left:1527.5px;top:249.8px;font-size:13px;line-height:16px;color:#3a3a3a;font-weight:400;letter-spacing:.15px">Kiválaszt</div><div class="t " style="left:1589.5px;top:249.8px;font-size:13px;line-height:16px;color:#3a3a3a;font-weight:400;letter-spacing:.2px">Mutasd</div>
<div class="t " style="left:980.5px;top:282.5px;font-size:16px;line-height:20px;color:#1a1a1a;font-weight:400;letter-spacing:-.11px">Budapest, Erdősor utca 160, 1213 Magyarország</div><div class="t " style="left:980.5px;top:302.7px;font-size:14px;line-height:18px;color:#3b3b3b;font-weight:400;letter-spacing:-.1px">Budapest, Erdősor utca 160, 1213 Magyarország</div><div class="a" style="left:1540px;top:277.0px;width:28px;height:28px;border-radius:50%;background:#823333"></div><svg class="ic" style="left:1546px;top:283.0px;width:16px;height:16px;" viewBox="0 0 24 24"><path fill="#a8a8a8" d="M9 16.17L4.83 12l-1.42 1.41L9 19 21 7l-1.41-1.41z"/></svg><div class="a" style="left:1598px;top:277.0px;width:28px;height:28px;border-radius:50%;background:#2a5869;box-shadow:0 2px 4px rgba(0,0,0,.3)"></div><svg class="ic" style="left:1604px;top:283.0px;width:16px;height:16px;" viewBox="0 0 24 24"><path fill="#a8a8a8" d="M12 4.5C7 4.5 2.73 7.61 1 12c1.73 4.39 6 7.5 11 7.5s9.27-3.11 11-7.5c-1.73-4.39-6-7.5-11-7.5zM12 17c-2.76 0-5-2.24-5-5s2.24-5 5-5 5 2.24 5 5-2.24 5-5 5zm0-8c-1.66 0-3 1.34-3 3s1.34 3 3 3 3-1.34 3-3-1.34-3-3-3z"/></svg><div class="t " style="left:1527.5px;top:313.8px;font-size:13px;line-height:16px;color:#3a3a3a;font-weight:400;letter-spacing:.15px">Kiválaszt</div><div class="t " style="left:1589.5px;top:313.8px;font-size:13px;line-height:16px;color:#3a3a3a;font-weight:400;letter-spacing:.2px">Mutasd</div>
<div class="t " style="left:980.5px;top:346.5px;font-size:16px;line-height:20px;color:#1a1a1a;font-weight:400;letter-spacing:-.11px">Silding Tobacco Bt.</div><div class="t " style="left:980.5px;top:366.7px;font-size:14px;line-height:18px;color:#3b3b3b;font-weight:400;letter-spacing:-.1px">Budapest, Mázoló u. 43, 1213 Magyarország</div><div class="a" style="left:1540px;top:341.0px;width:28px;height:28px;border-radius:50%;background:#823333"></div><svg class="ic" style="left:1546px;top:347.0px;width:16px;height:16px;" viewBox="0 0 24 24"><path fill="#a8a8a8" d="M9 16.17L4.83 12l-1.42 1.41L9 19 21 7l-1.41-1.41z"/></svg><div class="a" style="left:1598px;top:341.0px;width:28px;height:28px;border-radius:50%;background:#2a5869;box-shadow:0 2px 4px rgba(0,0,0,.3)"></div><svg class="ic" style="left:1604px;top:347.0px;width:16px;height:16px;" viewBox="0 0 24 24"><path fill="#a8a8a8" d="M12 4.5C7 4.5 2.73 7.61 1 12c1.73 4.39 6 7.5 11 7.5s9.27-3.11 11-7.5c-1.73-4.39-6-7.5-11-7.5zM12 17c-2.76 0-5-2.24-5-5s2.24-5 5-5 5 2.24 5 5-2.24 5-5 5zm0-8c-1.66 0-3 1.34-3 3s1.34 3 3 3 3-1.34 3-3-1.34-3-3-3z"/></svg><div class="t " style="left:1527.5px;top:377.8px;font-size:13px;line-height:16px;color:#3a3a3a;font-weight:400;letter-spacing:.15px">Kiválaszt</div><div class="t " style="left:1589.5px;top:377.8px;font-size:13px;line-height:16px;color:#3a3a3a;font-weight:400;letter-spacing:.2px">Mutasd</div>
<div class="t " style="left:980.5px;top:410.5px;font-size:16px;line-height:20px;color:#1a1a1a;font-weight:400;letter-spacing:-.11px">Budapest, Erdősor utca, 1214 Magyarország</div><div class="t " style="left:980.5px;top:430.7px;font-size:14px;line-height:18px;color:#3b3b3b;font-weight:400;letter-spacing:-.1px">Budapest, Erdősor utca, 1214 Magyarország</div><div class="a" style="left:1540px;top:405.0px;width:28px;height:28px;border-radius:50%;background:#823333"></div><svg class="ic" style="left:1546px;top:411.0px;width:16px;height:16px;" viewBox="0 0 24 24"><path fill="#a8a8a8" d="M9 16.17L4.83 12l-1.42 1.41L9 19 21 7l-1.41-1.41z"/></svg><div class="a" style="left:1598px;top:405.0px;width:28px;height:28px;border-radius:50%;background:#2a5869;box-shadow:0 2px 4px rgba(0,0,0,.3)"></div><svg class="ic" style="left:1604px;top:411.0px;width:16px;height:16px;" viewBox="0 0 24 24"><path fill="#a8a8a8" d="M12 4.5C7 4.5 2.73 7.61 1 12c1.73 4.39 6 7.5 11 7.5s9.27-3.11 11-7.5c-1.73-4.39-6-7.5-11-7.5zM12 17c-2.76 0-5-2.24-5-5s2.24-5 5-5 5 2.24 5 5-2.24 5-5 5zm0-8c-1.66 0-3 1.34-3 3s1.34 3 3 3 3-1.34 3-3-1.34-3-3-3z"/></svg><div class="t " style="left:1527.5px;top:441.8px;font-size:13px;line-height:16px;color:#3a3a3a;font-weight:400;letter-spacing:.15px">Kiválaszt</div><div class="t " style="left:1589.5px;top:441.8px;font-size:13px;line-height:16px;color:#3a3a3a;font-weight:400;letter-spacing:.2px">Mutasd</div>
<div class="t " style="left:980.5px;top:474.5px;font-size:16px;line-height:20px;color:#1f1f1f;font-weight:400;letter-spacing:-.11px">Seguros Bt.</div><div class="t " style="left:980.5px;top:494.7px;font-size:14px;line-height:18px;color:#595959;font-weight:400;letter-spacing:-.1px">Budapest, Mázoló u. 41, 1213 Magyarország</div><div class="a" style="left:1540px;top:469.0px;width:28px;height:28px;border-radius:50%;background:#ff6363"></div><svg class="ic" style="left:1546px;top:475.0px;width:16px;height:16px;" viewBox="0 0 24 24"><path fill="#ffffff" d="M9 16.17L4.83 12l-1.42 1.41L9 19 21 7l-1.41-1.41z"/></svg><div class="a" style="left:1598px;top:469.0px;width:28px;height:28px;border-radius:50%;background:#56a9c6;box-shadow:0 2px 4px rgba(0,0,0,.3)"></div><svg class="ic" style="left:1604px;top:475.0px;width:16px;height:16px;" viewBox="0 0 24 24"><path fill="#ffffff" d="M12 4.5C7 4.5 2.73 7.61 1 12c1.73 4.39 6 7.5 11 7.5s9.27-3.11 11-7.5c-1.73-4.39-6-7.5-11-7.5zM12 17c-2.76 0-5-2.24-5-5s2.24-5 5-5 5 2.24 5 5-2.24 5-5 5zm0-8c-1.66 0-3 1.34-3 3s1.34 3 3 3 3-1.34 3-3-1.34-3-3-3z"/></svg><div class="t " style="left:1527.5px;top:505.8px;font-size:13px;line-height:16px;color:#454545;font-weight:400;letter-spacing:.15px">Kiválaszt</div><div class="t " style="left:1589.5px;top:505.8px;font-size:13px;line-height:16px;color:#454545;font-weight:400;letter-spacing:.2px">Mutasd</div>
<div class="t " style="left:980.5px;top:538.5px;font-size:16px;line-height:20px;color:#1a1a1a;font-weight:400;letter-spacing:-.11px">Budapest, Erdősor utca 158, 1213 Magyarország</div><div class="t " style="left:980.5px;top:558.7px;font-size:14px;line-height:18px;color:#3b3b3b;font-weight:400;letter-spacing:-.1px">Budapest, Erdősor utca 158, 1213 Magyarország</div><div class="a" style="left:1540px;top:533.0px;width:28px;height:28px;border-radius:50%;background:#823333"></div><svg class="ic" style="left:1546px;top:539.0px;width:16px;height:16px;" viewBox="0 0 24 24"><path fill="#a8a8a8" d="M9 16.17L4.83 12l-1.42 1.41L9 19 21 7l-1.41-1.41z"/></svg><div class="a" style="left:1598px;top:533.0px;width:28px;height:28px;border-radius:50%;background:#2a5869;box-shadow:0 2px 4px rgba(0,0,0,.3)"></div><svg class="ic" style="left:1604px;top:539.0px;width:16px;height:16px;" viewBox="0 0 24 24"><path fill="#a8a8a8" d="M12 4.5C7 4.5 2.73 7.61 1 12c1.73 4.39 6 7.5 11 7.5s9.27-3.11 11-7.5c-1.73-4.39-6-7.5-11-7.5zM12 17c-2.76 0-5-2.24-5-5s2.24-5 5-5 5 2.24 5 5-2.24 5-5 5zm0-8c-1.66 0-3 1.34-3 3s1.34 3 3 3 3-1.34 3-3-1.34-3-3-3z"/></svg><div class="t " style="left:1527.5px;top:569.8px;font-size:13px;line-height:16px;color:#3a3a3a;font-weight:400;letter-spacing:.15px">Kiválaszt</div><div class="t " style="left:1589.5px;top:569.8px;font-size:13px;line-height:16px;color:#3a3a3a;font-weight:400;letter-spacing:.2px">Mutasd</div>
<div class="t " style="left:980.5px;top:602.5px;font-size:16px;line-height:20px;color:#1a1a1a;font-weight:400;letter-spacing:-.11px">C34G+VH Budapest, Magyarország</div><div class="t " style="left:980.5px;top:622.7px;font-size:14px;line-height:18px;color:#3b3b3b;font-weight:400;letter-spacing:-.1px">C34G+VH Budapest, Magyarország</div><div class="a" style="left:1540px;top:597.0px;width:28px;height:28px;border-radius:50%;background:#823333"></div><svg class="ic" style="left:1546px;top:603.0px;width:16px;height:16px;" viewBox="0 0 24 24"><path fill="#a8a8a8" d="M9 16.17L4.83 12l-1.42 1.41L9 19 21 7l-1.41-1.41z"/></svg><div class="a" style="left:1598px;top:597.0px;width:28px;height:28px;border-radius:50%;background:#2a5869;box-shadow:0 2px 4px rgba(0,0,0,.3)"></div><svg class="ic" style="left:1604px;top:603.0px;width:16px;height:16px;" viewBox="0 0 24 24"><path fill="#a8a8a8" d="M12 4.5C7 4.5 2.73 7.61 1 12c1.73 4.39 6 7.5 11 7.5s9.27-3.11 11-7.5c-1.73-4.39-6-7.5-11-7.5zM12 17c-2.76 0-5-2.24-5-5s2.24-5 5-5 5 2.24 5 5-2.24 5-5 5zm0-8c-1.66 0-3 1.34-3 3s1.34 3 3 3 3-1.34 3-3-1.34-3-3-3z"/></svg><div class="t " style="left:1527.5px;top:633.8px;font-size:13px;line-height:16px;color:#3a3a3a;font-weight:400;letter-spacing:.15px">Kiválaszt</div><div class="t " style="left:1589.5px;top:633.8px;font-size:13px;line-height:16px;color:#3a3a3a;font-weight:400;letter-spacing:.2px">Mutasd</div>
<div class="t " style="left:980.5px;top:666.5px;font-size:16px;line-height:20px;color:#1a1a1a;font-weight:400;letter-spacing:-.11px">Leander Falatozó</div><div class="t " style="left:980.5px;top:686.7px;font-size:14px;line-height:18px;color:#3b3b3b;font-weight:400;letter-spacing:-.1px">Budapest, Erdősor utca 168, 1213 Magyarország</div><div class="a" style="left:1540px;top:661.0px;width:28px;height:28px;border-radius:50%;background:#823333"></div><svg class="ic" style="left:1546px;top:667.0px;width:16px;height:16px;" viewBox="0 0 24 24"><path fill="#a8a8a8" d="M9 16.17L4.83 12l-1.42 1.41L9 19 21 7l-1.41-1.41z"/></svg><div class="a" style="left:1598px;top:661.0px;width:28px;height:28px;border-radius:50%;background:#2a5869;box-shadow:0 2px 4px rgba(0,0,0,.3)"></div><svg class="ic" style="left:1604px;top:667.0px;width:16px;height:16px;" viewBox="0 0 24 24"><path fill="#a8a8a8" d="M12 4.5C7 4.5 2.73 7.61 1 12c1.73 4.39 6 7.5 11 7.5s9.27-3.11 11-7.5c-1.73-4.39-6-7.5-11-7.5zM12 17c-2.76 0-5-2.24-5-5s2.24-5 5-5 5 2.24 5 5-2.24 5-5 5zm0-8c-1.66 0-3 1.34-3 3s1.34 3 3 3 3-1.34 3-3-1.34-3-3-3z"/></svg><div class="t " style="left:1527.5px;top:697.8px;font-size:13px;line-height:16px;color:#3a3a3a;font-weight:400;letter-spacing:.15px">Kiválaszt</div><div class="t " style="left:1589.5px;top:697.8px;font-size:13px;line-height:16px;color:#3a3a3a;font-weight:400;letter-spacing:.2px">Mutasd</div>
<div class="t " style="left:980.5px;top:730.5px;font-size:16px;line-height:20px;color:#1a1a1a;font-weight:400;letter-spacing:-.11px">Weikó Eggs Kkt.</div><div class="t " style="left:980.5px;top:750.7px;font-size:14px;line-height:18px;color:#3b3b3b;font-weight:400;letter-spacing:-.1px">Budapest, Kőrösi Sándor utca 9, 1213 Magyarország</div><div class="a" style="left:1540px;top:725.0px;width:28px;height:28px;border-radius:50%;background:#823333"></div><svg class="ic" style="left:1546px;top:731.0px;width:16px;height:16px;" viewBox="0 0 24 24"><path fill="#a8a8a8" d="M9 16.17L4.83 12l-1.42 1.41L9 19 21 7l-1.41-1.41z"/></svg><div class="a" style="left:1598px;top:725.0px;width:28px;height:28px;border-radius:50%;background:#2a5869;box-shadow:0 2px 4px rgba(0,0,0,.3)"></div><svg class="ic" style="left:1604px;top:731.0px;width:16px;height:16px;" viewBox="0 0 24 24"><path fill="#a8a8a8" d="M12 4.5C7 4.5 2.73 7.61 1 12c1.73 4.39 6 7.5 11 7.5s9.27-3.11 11-7.5c-1.73-4.39-6-7.5-11-7.5zM12 17c-2.76 0-5-2.24-5-5s2.24-5 5-5 5 2.24 5 5-2.24 5-5 5zm0-8c-1.66 0-3 1.34-3 3s1.34 3 3 3 3-1.34 3-3-1.34-3-3-3z"/></svg><div class="t " style="left:1527.5px;top:761.8px;font-size:13px;line-height:16px;color:#3a3a3a;font-weight:400;letter-spacing:.15px">Kiválaszt</div><div class="t " style="left:1589.5px;top:761.8px;font-size:13px;line-height:16px;color:#3a3a3a;font-weight:400;letter-spacing:.2px">Mutasd</div>
<div class="t " style="left:980.5px;top:794.5px;font-size:16px;line-height:20px;color:#1a1a1a;font-weight:400;letter-spacing:-.11px">Locatecomm Bt.</div><div class="t " style="left:980.5px;top:814.7px;font-size:14px;line-height:18px;color:#3b3b3b;font-weight:400;letter-spacing:-.1px">Budapest, 1213 Magyarország</div><div class="a" style="left:1540px;top:789.0px;width:28px;height:28px;border-radius:50%;background:#823333"></div><svg class="ic" style="left:1546px;top:795.0px;width:16px;height:16px;" viewBox="0 0 24 24"><path fill="#a8a8a8" d="M9 16.17L4.83 12l-1.42 1.41L9 19 21 7l-1.41-1.41z"/></svg><div class="a" style="left:1598px;top:789.0px;width:28px;height:28px;border-radius:50%;background:#2a5869;box-shadow:0 2px 4px rgba(0,0,0,.3)"></div><svg class="ic" style="left:1604px;top:795.0px;width:16px;height:16px;" viewBox="0 0 24 24"><path fill="#a8a8a8" d="M12 4.5C7 4.5 2.73 7.61 1 12c1.73 4.39 6 7.5 11 7.5s9.27-3.11 11-7.5c-1.73-4.39-6-7.5-11-7.5zM12 17c-2.76 0-5-2.24-5-5s2.24-5 5-5 5 2.24 5 5-2.24 5-5 5zm0-8c-1.66 0-3 1.34-3 3s1.34 3 3 3 3-1.34 3-3-1.34-3-3-3z"/></svg><div class="t " style="left:1527.5px;top:825.8px;font-size:13px;line-height:16px;color:#3a3a3a;font-weight:400;letter-spacing:.15px">Kiválaszt</div><div class="t " style="left:1589.5px;top:825.8px;font-size:13px;line-height:16px;color:#3a3a3a;font-weight:400;letter-spacing:.2px">Mutasd</div>
</div></div>
<div class="a" style="left:1650px;top:134px;width:10px;height:92px;background:#875959"></div>
<div class="a" style="left:1643px;top:58px;width:40px;height:40px;border-radius:50%;background:#833333;box-shadow:0 2px 5px rgba(0,0,0,.4)"></div>
<svg class="ic" style="left:1651px;top:66px;width:24px;height:24px;" viewBox="0 0 24 24"><path fill="#b4acaa" d="M19 6.41L17.59 5 12 10.59 6.41 5 5 6.41 10.59 12 5 17.59 6.41 19 12 13.41 17.59 19 19 17.59 13.41 12z"/></svg>
</div>
</body></html>
